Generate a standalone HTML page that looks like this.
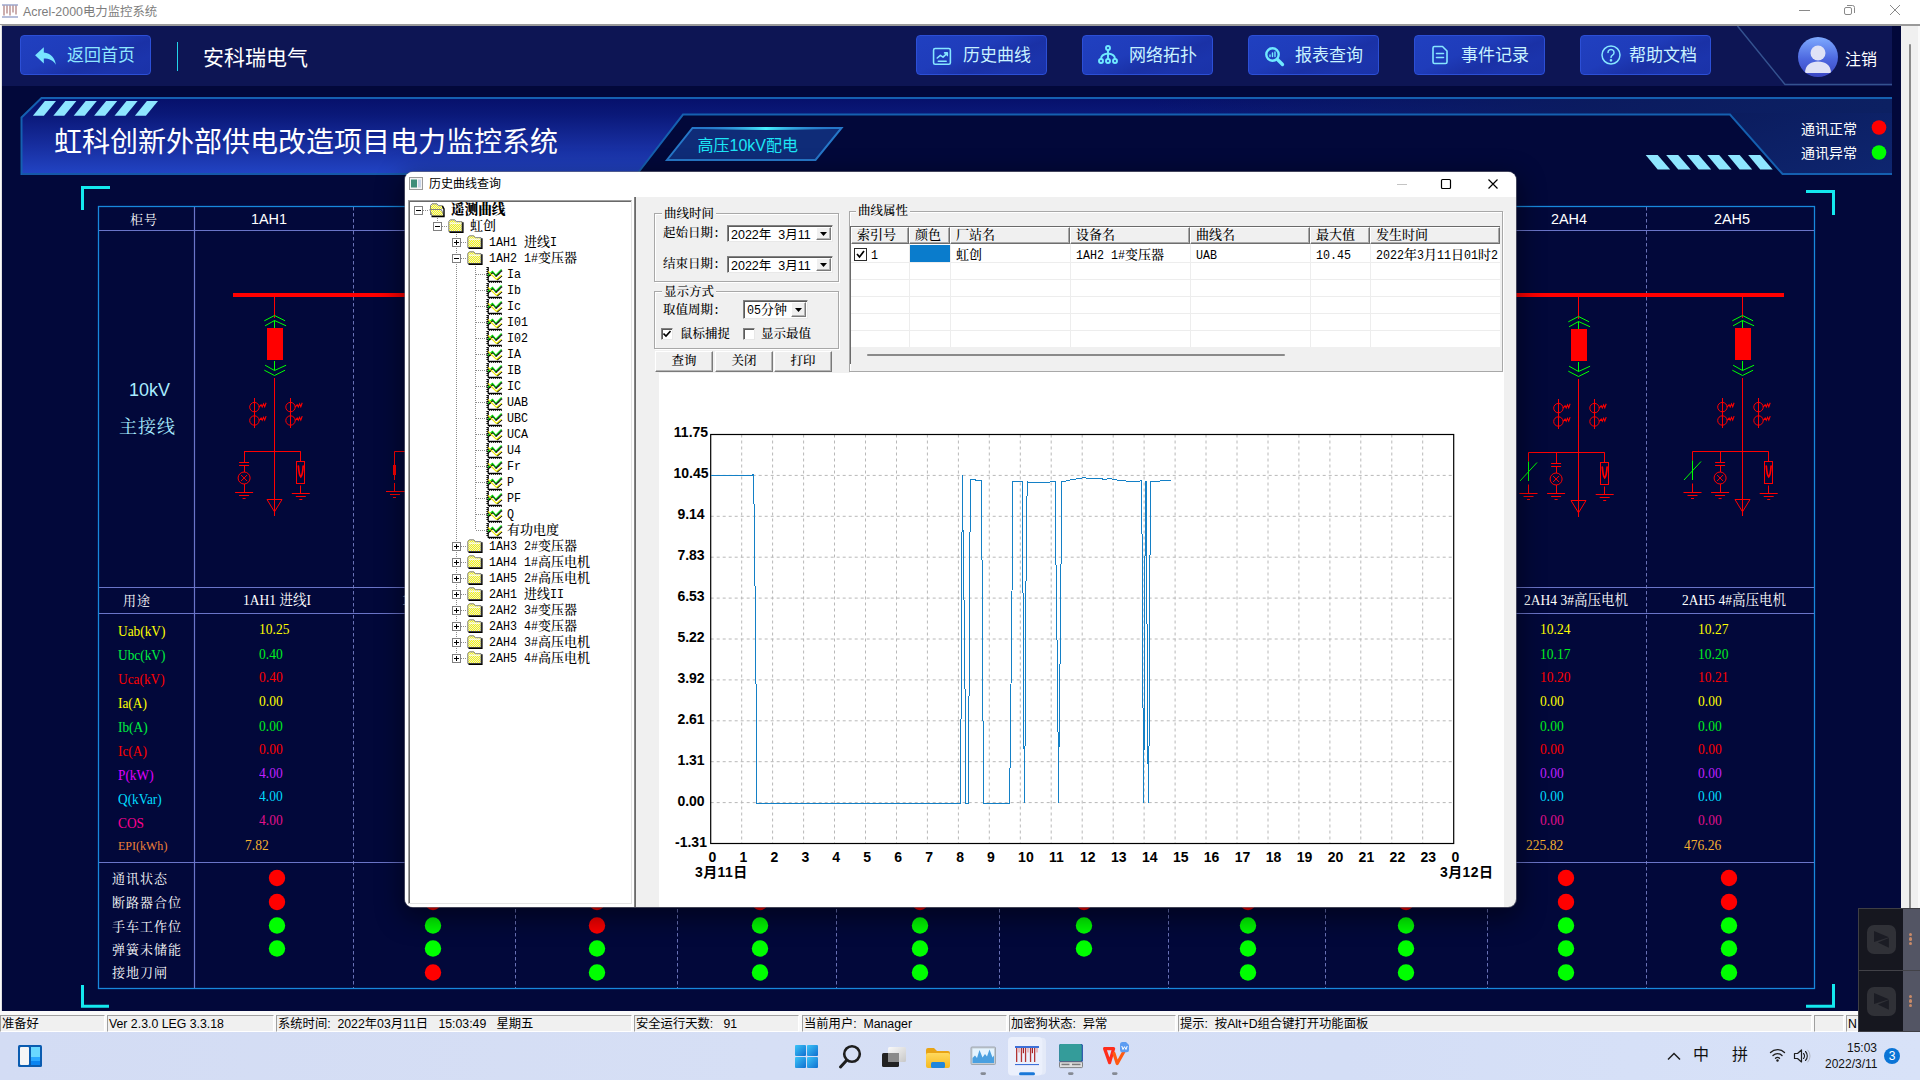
<!DOCTYPE html><html lang="zh"><head><meta charset="utf-8"><title>Acrel-2000电力监控系统</title><style>
*{box-sizing:border-box;margin:0;padding:0}
html,body{width:1920px;height:1080px;overflow:hidden;background:#fff}
body{position:relative;font-family:"Liberation Sans","Noto Sans CJK SC",sans-serif;font-size:12px;color:#000}
.abs{position:absolute}
.t{position:absolute;white-space:pre;line-height:1}
#app{position:absolute;left:2px;top:26px;width:1890px;height:985px;background:#02083a;overflow:hidden}
#toolbar{position:absolute;left:0;top:0;width:1890px;height:60px;background:#0d1554}
.tbtn{position:absolute;top:9px;width:131px;height:40px;border:1px solid #2c4fd6;border-radius:4px;
 background:linear-gradient(158deg,#2040c0 0%,#1f3cba 40%,#1a31a6 62%,#1b34ac 80%,#1a32a8 100%);color:#c8f2ff;font-size:17px;line-height:38px;white-space:nowrap}
.tbtn span{position:absolute;top:1px;line-height:38px}
.tbtn svg{position:absolute}
.serif{font-family:"Liberation Serif","Noto Serif CJK SC",serif}
.kai{font-family:"Liberation Serif","Noto Serif CJK SC",serif;letter-spacing:2px}
.sim{font-family:"Liberation Mono","Noto Serif CJK SC",monospace;font-size:12px}
</style></head><body>
<div class="abs" style="left:0;top:0;width:1920px;height:24px;background:#fff"></div>
<div class="abs" style="left:0;top:24px;width:1920px;height:2px;background:#9a9a9a"></div>
<div class="abs" style="left:0;top:25px;width:2px;height:990px;background:linear-gradient(90deg,#fafafa 60%,#b0b0b8)"></div>
<svg class="abs" style="left:2px;top:4px" width="18" height="16" viewBox="0 0 18 16"><rect x="0" y="0.500" width="16" height="1" fill="#6d7fb8"/><rect x="0" y="12.500" width="16" height="1" fill="#6d7fb8"/><g fill="#9a5f5f"><rect x="1.500" y="1.500" width="1" height="10"/><rect x="4.500" y="1.500" width="1" height="8"/><rect x="7.500" y="1.500" width="1" height="10"/><rect x="10.500" y="1.500" width="1" height="7"/><rect x="13.500" y="1.500" width="1" height="9"/></g></svg>
<div class="t" style="left:23px;top:6px;font-size:12.400px;color:#7d7d7d">Acrel-2000电力监控系统</div>
<svg class="abs" style="left:1790px;top:0" width="130" height="24" viewBox="0 0 130 24" fill="none" stroke="#8a8a8a" stroke-width="1"><path d="M9 10.5h11"/><rect x="54.5" y="7.5" width="7" height="7" rx="1.5"/><path d="M57 5.5h5.5a2 2 0 0 1 2 2V13"/><path d="M100 5l10 10M110 5l-10 10"/></svg>
<div class="abs" style="left:1892px;top:26px;width:9px;height:985px;background:#02083a"></div>
<div class="abs" style="left:1901px;top:26px;width:17px;height:985px;background:#f0f0f0"></div>
<div class="abs" style="left:1918px;top:26px;width:2px;height:985px;background:#fafafa"></div>
<div class="abs" style="left:1909px;top:44px;width:2px;height:950px;background:#8c8c8c;border-radius:1px"></div>
<div id="app">
<div id="toolbar">
<div class="tbtn" style="left:18px"><svg style="left:13px;top:10px" width="24" height="22" viewBox="0 0 22 20"><path d="M9 1L1 8.5 9 16v-4.6c5 0 8.5 1.6 11 5.6-.6-6-4.4-10.4-11-11.2z" fill="#78e4ff"/></svg><span style="left:46px;color:#8ee6ff">返回首页</span></div>
<div class="abs" style="left:174.500px;top:16px;width:1.500px;height:29px;background:#22d4e8"></div>
<div class="t" style="left:201px;top:21px;font-size:21px;color:#fff">安科瑞电气</div>
<div class="tbtn" style="left:914px"><svg style="left:14.500px;top:10.500px" width="21" height="21" viewBox="0 0 20 20" fill="none" stroke="#86e6ff" stroke-width="1.5" stroke-linecap="round" stroke-linejoin="round"><rect x="1.5" y="1.5" width="16" height="15" rx="1.5"/><path d="M5 10.5l3-2.6 2.5 1.8 4-3.9M12 5.6h2.6v2.6M6 13.6h7.5"/></svg><span style="left:46px">历史曲线</span></div>
<div class="tbtn" style="left:1080px"><svg style="left:14px;top:8px" width="22" height="22" viewBox="0 0 22 22" fill="none" stroke="#70eaff" stroke-width="1.900" stroke-linecap="round"><circle cx="11" cy="4" r="2"/><circle cx="4" cy="17" r="2"/><circle cx="11" cy="17" r="2"/><circle cx="18" cy="17" r="2"/><path d="M11 6v9M11 9.5C6 10 4 12 4 15M11 9.5c5 .5 7 2.500 7 5.500"/></svg><span style="left:46px">网络拓扑</span></div>
<div class="tbtn" style="left:1246px"><svg style="left:15px;top:10px" width="22" height="22" viewBox="0 0 22 22" fill="none" stroke="#70eaff" stroke-linecap="round"><circle cx="8.5" cy="8.500" r="6.2" stroke-width="2.400"/><path d="M13.5 13.5L18.500 18.500" stroke-width="3.300"/><path d="M6 10.5V9M8.500 10.500V7M11 10.500V6" stroke-width="1.400"/></svg><span style="left:46px">报表查询</span></div>
<div class="tbtn" style="left:1412px"><svg style="left:16px;top:9px" width="18" height="20" viewBox="0 0 18 20" fill="none" stroke="#86e6ff" stroke-width="1.600" stroke-linecap="round" stroke-linejoin="round"><path d="M3.500 1.500h8L16 6v11a1.500 1.500 0 0 1 -1.500 1.500h-11A1.500 1.500 0 0 1 2 17V3a1.500 1.500 0 0 1 1.500 -1.500z"/><path d="M5.500 8.500h7M5.500 12.500h7"/></svg><span style="left:46px">事件记录</span></div>
<div class="tbtn" style="left:1578px"><svg style="left:19px;top:8px" width="22" height="22" viewBox="0 0 22 22" fill="none" stroke="#86e6ff" stroke-width="1.500" stroke-linecap="round"><circle cx="11" cy="11" r="9"/><path d="M8 8.500a3 3 0 1 1 4.500 2.600c-1 .6-1.500 1.200-1.500 2.400"/><circle cx="11" cy="16.300" r=".6" fill="#86e6ff"/></svg><span style="left:48px">帮助文档</span></div>
</div>
<svg class="abs" style="left:1700px;top:0" width="190" height="62" viewBox="0 0 190 62"><path d="M35.500 0L83 58.500H190" fill="none" stroke="#34528f" stroke-width="1.500"/><defs><linearGradient id="av" x1="0" y1="0" x2="0" y2="1"><stop offset="0" stop-color="#7eaaff"/><stop offset=".55" stop-color="#4d68e0"/><stop offset="1" stop-color="#3a46c2"/></linearGradient><clipPath id="avc"><circle cx="116" cy="31" r="20"/></clipPath></defs><circle cx="116" cy="31" r="20" fill="url(#av)"/><g clip-path="url(#avc)" fill="#dfe2f6"><circle cx="116" cy="27" r="7.500"/><path d="M103 47c0-8 6-11.500 13-11.500s13 3.500 13 11.500z"/></g></svg>
<div class="t" style="left:1843px;top:26px;font-size:16px;color:#fff">注销</div>
<div id="appin" class="abs" style="left:-2px;top:-26px;width:1920px;height:1080px">
<svg class="abs" style="left:0;top:0" width="1920" height="1080" viewBox="0 0 1920 1080"><defs>
<linearGradient id="bn" gradientUnits="userSpaceOnUse" x1="0" y1="97" x2="0" y2="174"><stop offset="0" stop-color="#06106a"/><stop offset=".22" stop-color="#0a1878"/><stop offset=".6" stop-color="#162c9c"/><stop offset="1" stop-color="#2244c4"/></linearGradient>
<linearGradient id="rg" x1="0" y1="0" x2="1" y2="1"><stop offset="0" stop-color="#0b1c5e"/><stop offset="1" stop-color="#0e2670"/></linearGradient>
<linearGradient id="st" gradientUnits="userSpaceOnUse" x1="1150" y1="0" x2="1892" y2="0"><stop offset="0" stop-color="#0b1c5e" stop-opacity="0"/><stop offset=".6" stop-color="#0b1c5e" stop-opacity=".9"/><stop offset="1" stop-color="#0c2062"/></linearGradient>
<linearGradient id="hl" x1="0" y1="0" x2="1" y2="0"><stop offset="0" stop-color="#2a7fd0" stop-opacity="0"/><stop offset=".5" stop-color="#46f0ff"/><stop offset="1" stop-color="#2a7fd0" stop-opacity="0"/></linearGradient>
</defs><polygon points="42,97 1892,97 1892,114.500 25,114.500" fill="url(#bn)"/><rect x="1150" y="97" width="742" height="17.500" fill="url(#st)"/><polygon points="22,117 42,97 690,97 683,114 637,174 22,174" fill="url(#bn)"/><polygon points="1730,113 1892,113 1892,173.500 1782.500,173.500" fill="url(#rg)"/><path d="M21.500 175V117.500L41.500 98H1892" fill="none" stroke="#1560b0" stroke-width="2"/><path d="M637.500 173.500L683 114.600H1730L1782.500 174H1892" fill="none" stroke="#1560b0" stroke-width="2"/><path d="M22 174H637" stroke="#1558a8" stroke-width="2"/><polygon points="32.9,115.700 44.9,101 56.0,101 43.9,115.700" fill="#8ee6ff"/><polygon points="53.3,115.700 65.3,101 76.4,101 64.3,115.700" fill="#8ee6ff"/><polygon points="73.7,115.700 85.7,101 96.8,101 84.7,115.700" fill="#8ee6ff"/><polygon points="94.1,115.700 106.1,101 117.2,101 105.1,115.700" fill="#8ee6ff"/><polygon points="114.5,115.700 126.5,101 137.6,101 125.5,115.700" fill="#8ee6ff"/><polygon points="134.9,115.700 146.9,101 158.0,101 145.9,115.700" fill="#8ee6ff"/><polygon points="1645.7,155 1657.7,155 1670.2,169.500 1657.7,169.500" fill="#8ee6ff"/><polygon points="1666.2,155 1678.2,155 1690.7,169.500 1678.2,169.500" fill="#8ee6ff"/><polygon points="1686.7,155 1698.7,155 1711.2,169.500 1698.7,169.500" fill="#8ee6ff"/><polygon points="1707.2,155 1719.2,155 1731.7,169.500 1719.2,169.500" fill="#8ee6ff"/><polygon points="1727.7,155 1739.7,155 1752.2,169.500 1739.7,169.500" fill="#8ee6ff"/><polygon points="1748.2,155 1760.2,155 1772.7,169.500 1760.2,169.500" fill="#8ee6ff"/><polygon points="692.500,128 841.500,128 815.500,160 667,160" fill="#0f2c78" stroke="#2677c8" stroke-width="2"/><rect x="700" y="127" width="132" height="3" fill="url(#hl)"/><circle cx="1879" cy="127.500" r="7.300" fill="#ff0000"/><circle cx="1879" cy="152.500" r="7.300" fill="#00ff00"/><path d="M82.500 210V187.500H110" fill="none" stroke="#14e8ee" stroke-width="3"/><path d="M1806 191.500H1833.500V215" fill="none" stroke="#14e8ee" stroke-width="3"/><path d="M82.500 985V1006.200H109" fill="none" stroke="#14e8ee" stroke-width="3"/><path d="M1806 1006.200H1833.500V984" fill="none" stroke="#14e8ee" stroke-width="3"/><rect x="98.500" y="206.500" width="1716" height="782" fill="none" stroke="#1888dc" stroke-width="1.300"/><line x1="99" y1="230.5" x2="1814" y2="230.5" stroke="#6a74c8" stroke-width="1.200"/><line x1="99" y1="587.5" x2="1814" y2="587.5" stroke="#6a74c8" stroke-width="1.200"/><line x1="99" y1="613.5" x2="1814" y2="613.5" stroke="#6a74c8" stroke-width="1.200"/><line x1="99" y1="862.5" x2="1814" y2="862.5" stroke="#6a74c8" stroke-width="1.200"/><line x1="194.500" y1="207" x2="194.500" y2="988" stroke="#6a74c8" stroke-width="1.200"/><line x1="353.5" y1="207" x2="353.5" y2="988" stroke="#7c84cc" stroke-width="1" stroke-dasharray="3.500 2.500" opacity=".85"/><line x1="515.5" y1="207" x2="515.5" y2="988" stroke="#7c84cc" stroke-width="1" stroke-dasharray="3.500 2.500" opacity=".85"/><line x1="677.5" y1="207" x2="677.5" y2="988" stroke="#7c84cc" stroke-width="1" stroke-dasharray="3.500 2.500" opacity=".85"/><line x1="836.5" y1="207" x2="836.5" y2="988" stroke="#7c84cc" stroke-width="1" stroke-dasharray="3.500 2.500" opacity=".85"/><line x1="999.5" y1="207" x2="999.5" y2="988" stroke="#7c84cc" stroke-width="1" stroke-dasharray="3.500 2.500" opacity=".85"/><line x1="1168.5" y1="207" x2="1168.5" y2="988" stroke="#7c84cc" stroke-width="1" stroke-dasharray="3.500 2.500" opacity=".85"/><line x1="1325.5" y1="207" x2="1325.5" y2="988" stroke="#7c84cc" stroke-width="1" stroke-dasharray="3.500 2.500" opacity=".85"/><line x1="1487.5" y1="207" x2="1487.5" y2="988" stroke="#7c84cc" stroke-width="1" stroke-dasharray="3.500 2.500" opacity=".85"/><line x1="1646.5" y1="207" x2="1646.5" y2="988" stroke="#7c84cc" stroke-width="1" stroke-dasharray="3.500 2.500" opacity=".85"/><rect x="233" y="293" width="600" height="4" fill="#ff0000"/><rect x="1000" y="293" width="784" height="4" fill="#ff0000"/><line x1="274.5" y1="297.0" x2="274.5" y2="318.0" stroke="#ff0000" stroke-width="1"/><polyline points="264.3,320.8 274.5,315.5 285.1,320.8" fill="none" stroke="#00ff00" stroke-width="1"/><polyline points="265.1,325.8 274.5,320.5 286.1,325.8" fill="none" stroke="#00ff00" stroke-width="1"/><line x1="274.5" y1="320.5" x2="274.5" y2="329.0" stroke="#00ff00" stroke-width="1"/><rect x="267.0" y="328" width="16" height="32" fill="#ff0000"/><line x1="274.5" y1="361.0" x2="274.5" y2="370.5" stroke="#00ff00" stroke-width="1"/><polyline points="265.1,365.2 274.5,370.5 286.1,365.2" fill="none" stroke="#00ff00" stroke-width="1"/><polyline points="264.3,370.2 274.5,375.5 285.1,370.2" fill="none" stroke="#00ff00" stroke-width="1"/><line x1="274.5" y1="378.0" x2="274.5" y2="516.0" stroke="#ff0000" stroke-width="1"/><line x1="254.5" y1="398.0" x2="254.5" y2="428.0" stroke="#ff0000" stroke-width="1"/><circle cx="254.4" cy="407.1" r="4.7" fill="none" stroke="#ff0000" stroke-width="1"/><path d="M259.1 407.1l2 -2.400 1.100 2.200 1.300 -3 1.200 2.800 1.400 -4" fill="none" stroke="#ff0000" stroke-width="1.100"/><circle cx="254.4" cy="420.5" r="4.7" fill="none" stroke="#ff0000" stroke-width="1"/><path d="M259.1 420.5l2 -2.400 1.100 2.200 1.300 -3 1.200 2.800 1.400 -4" fill="none" stroke="#ff0000" stroke-width="1.100"/><line x1="290.5" y1="398.0" x2="290.5" y2="428.0" stroke="#ff0000" stroke-width="1"/><circle cx="290.5" cy="407.1" r="4.7" fill="none" stroke="#ff0000" stroke-width="1"/><path d="M295.2 407.1l2 -2.400 1.100 2.200 1.300 -3 1.200 2.800 1.400 -4" fill="none" stroke="#ff0000" stroke-width="1.100"/><circle cx="290.5" cy="420.5" r="4.7" fill="none" stroke="#ff0000" stroke-width="1"/><path d="M295.2 420.5l2 -2.400 1.100 2.200 1.300 -3 1.200 2.800 1.400 -4" fill="none" stroke="#ff0000" stroke-width="1.100"/><line x1="244.1" y1="451.5" x2="300.8" y2="451.5" stroke="#ff0000" stroke-width="1"/><line x1="244.5" y1="451.5" x2="244.5" y2="462.5" stroke="#ff0000" stroke-width="1"/><line x1="239.1" y1="462.5" x2="249.1" y2="462.5" stroke="#ff0000" stroke-width="1"/><line x1="239.1" y1="465.5" x2="249.1" y2="465.5" stroke="#ff0000" stroke-width="1"/><line x1="244.5" y1="465.5" x2="244.5" y2="472.0" stroke="#ff0000" stroke-width="1"/><circle cx="244.1" cy="478.0" r="6" fill="none" stroke="#ff0000" stroke-width="1"/><line x1="241.1" y1="475.0" x2="247.1" y2="481.0" stroke="#ff0000" stroke-width="1"/><line x1="241.1" y1="481.0" x2="247.1" y2="475.0" stroke="#ff0000" stroke-width="1"/><line x1="244.5" y1="484.0" x2="244.5" y2="492.5" stroke="#ff0000" stroke-width="1"/><line x1="235.1" y1="492.5" x2="253.1" y2="492.5" stroke="#ff0000" stroke-width="1"/><line x1="239.1" y1="495.5" x2="249.1" y2="495.5" stroke="#ff0000" stroke-width="1"/><line x1="242.6" y1="498.5" x2="245.6" y2="498.5" stroke="#ff0000" stroke-width="1"/><line x1="300.5" y1="451.5" x2="300.5" y2="461.5" stroke="#ff0000" stroke-width="1"/><rect x="296.5" y="461.5" width="8" height="22" fill="none" stroke="#ff0000" stroke-width="1"/><path d="M298.4 466.0c.3 4 .8 9.500 2.400 11c1.600 -1.500 2.100 -7 2.400 -11" fill="none" stroke="#ff0000" stroke-width="1.700" stroke-linecap="round"/><line x1="300.5" y1="485.5" x2="300.5" y2="493.5" stroke="#ff0000" stroke-width="1"/><line x1="291.8" y1="493.5" x2="309.8" y2="493.5" stroke="#ff0000" stroke-width="1"/><line x1="295.8" y1="496.5" x2="305.8" y2="496.5" stroke="#ff0000" stroke-width="1"/><line x1="299.3" y1="499.5" x2="302.3" y2="499.5" stroke="#ff0000" stroke-width="1"/><polygon points="267.0,499.5 282.0,499.5 274.5,511.8" fill="none" stroke="#ff0000" stroke-width="1"/><line x1="1578.5" y1="297.0" x2="1578.5" y2="319.0" stroke="#ff0000" stroke-width="1"/><polyline points="1568.3,321.8 1578.5,316.5 1589.1,321.8" fill="none" stroke="#00ff00" stroke-width="1"/><polyline points="1569.1,326.8 1578.5,321.5 1590.1,326.8" fill="none" stroke="#00ff00" stroke-width="1"/><line x1="1578.5" y1="321.5" x2="1578.5" y2="330.0" stroke="#00ff00" stroke-width="1"/><rect x="1571.0" y="329" width="16" height="32" fill="#ff0000"/><line x1="1578.5" y1="362.0" x2="1578.5" y2="371.5" stroke="#00ff00" stroke-width="1"/><polyline points="1569.1,366.2 1578.5,371.5 1590.1,366.2" fill="none" stroke="#00ff00" stroke-width="1"/><polyline points="1568.3,371.2 1578.5,376.5 1589.1,371.2" fill="none" stroke="#00ff00" stroke-width="1"/><line x1="1578.5" y1="379.0" x2="1578.5" y2="517.0" stroke="#ff0000" stroke-width="1"/><line x1="1558.5" y1="399.0" x2="1558.5" y2="429.0" stroke="#ff0000" stroke-width="1"/><circle cx="1558.4" cy="408.1" r="4.7" fill="none" stroke="#ff0000" stroke-width="1"/><path d="M1563.1 408.1l2 -2.400 1.100 2.200 1.300 -3 1.200 2.800 1.400 -4" fill="none" stroke="#ff0000" stroke-width="1.100"/><circle cx="1558.4" cy="421.5" r="4.7" fill="none" stroke="#ff0000" stroke-width="1"/><path d="M1563.1 421.5l2 -2.400 1.100 2.200 1.300 -3 1.200 2.800 1.400 -4" fill="none" stroke="#ff0000" stroke-width="1.100"/><line x1="1594.5" y1="399.0" x2="1594.5" y2="429.0" stroke="#ff0000" stroke-width="1"/><circle cx="1594.5" cy="408.1" r="4.7" fill="none" stroke="#ff0000" stroke-width="1"/><path d="M1599.2 408.1l2 -2.400 1.100 2.200 1.300 -3 1.200 2.800 1.400 -4" fill="none" stroke="#ff0000" stroke-width="1.100"/><circle cx="1594.5" cy="421.5" r="4.7" fill="none" stroke="#ff0000" stroke-width="1"/><path d="M1599.2 421.5l2 -2.400 1.100 2.200 1.300 -3 1.200 2.800 1.400 -4" fill="none" stroke="#ff0000" stroke-width="1.100"/><line x1="1528.5" y1="452.5" x2="1604.7" y2="452.5" stroke="#ff0000" stroke-width="1"/><line x1="1556.5" y1="452.5" x2="1556.5" y2="463.5" stroke="#ff0000" stroke-width="1"/><line x1="1551.1" y1="463.5" x2="1561.1" y2="463.5" stroke="#ff0000" stroke-width="1"/><line x1="1551.1" y1="466.5" x2="1561.1" y2="466.5" stroke="#ff0000" stroke-width="1"/><line x1="1556.5" y1="466.5" x2="1556.5" y2="473.0" stroke="#ff0000" stroke-width="1"/><circle cx="1556.1" cy="479.0" r="6" fill="none" stroke="#ff0000" stroke-width="1"/><line x1="1553.1" y1="476.0" x2="1559.1" y2="482.0" stroke="#ff0000" stroke-width="1"/><line x1="1553.1" y1="482.0" x2="1559.1" y2="476.0" stroke="#ff0000" stroke-width="1"/><line x1="1556.5" y1="485.0" x2="1556.5" y2="493.5" stroke="#ff0000" stroke-width="1"/><line x1="1547.1" y1="493.5" x2="1565.1" y2="493.5" stroke="#ff0000" stroke-width="1"/><line x1="1551.1" y1="496.5" x2="1561.1" y2="496.5" stroke="#ff0000" stroke-width="1"/><line x1="1554.6" y1="499.5" x2="1557.6" y2="499.5" stroke="#ff0000" stroke-width="1"/><line x1="1604.5" y1="452.5" x2="1604.5" y2="462.5" stroke="#ff0000" stroke-width="1"/><rect x="1600.5" y="462.5" width="8" height="22" fill="none" stroke="#ff0000" stroke-width="1"/><path d="M1602.3 467.0c.3 4 .8 9.500 2.400 11c1.600 -1.500 2.100 -7 2.400 -11" fill="none" stroke="#ff0000" stroke-width="1.700" stroke-linecap="round"/><line x1="1604.5" y1="486.5" x2="1604.5" y2="494.5" stroke="#ff0000" stroke-width="1"/><line x1="1595.7" y1="494.5" x2="1613.7" y2="494.5" stroke="#ff0000" stroke-width="1"/><line x1="1599.7" y1="497.5" x2="1609.7" y2="497.5" stroke="#ff0000" stroke-width="1"/><line x1="1603.2" y1="500.5" x2="1606.2" y2="500.5" stroke="#ff0000" stroke-width="1"/><line x1="1528.5" y1="452.5" x2="1528.5" y2="461.5" stroke="#ff0000" stroke-width="1"/><line x1="1528.5" y1="461.5" x2="1528.5" y2="481.0" stroke="#00ff00" stroke-width="1"/><line x1="1520.0" y1="481.0" x2="1537.0" y2="462.5" stroke="#00ff00" stroke-width="1"/><line x1="1528.5" y1="484.5" x2="1528.5" y2="493.0" stroke="#ff0000" stroke-width="1"/><line x1="1519.5" y1="493.5" x2="1537.5" y2="493.5" stroke="#ff0000" stroke-width="1"/><line x1="1523.5" y1="496.5" x2="1533.5" y2="496.5" stroke="#ff0000" stroke-width="1"/><line x1="1527.0" y1="499.5" x2="1530.0" y2="499.5" stroke="#ff0000" stroke-width="1"/><polygon points="1571.0,500.5 1586.0,500.5 1578.5,512.8" fill="none" stroke="#ff0000" stroke-width="1"/><line x1="1742.5" y1="297.0" x2="1742.5" y2="318.0" stroke="#ff0000" stroke-width="1"/><polyline points="1732.3,320.8 1742.5,315.5 1753.1,320.8" fill="none" stroke="#00ff00" stroke-width="1"/><polyline points="1733.1,325.8 1742.5,320.5 1754.1,325.8" fill="none" stroke="#00ff00" stroke-width="1"/><line x1="1742.5" y1="320.5" x2="1742.5" y2="329.0" stroke="#00ff00" stroke-width="1"/><rect x="1735.0" y="328" width="16" height="32" fill="#ff0000"/><line x1="1742.5" y1="361.0" x2="1742.5" y2="370.5" stroke="#00ff00" stroke-width="1"/><polyline points="1733.1,365.2 1742.5,370.5 1754.1,365.2" fill="none" stroke="#00ff00" stroke-width="1"/><polyline points="1732.3,370.2 1742.5,375.5 1753.1,370.2" fill="none" stroke="#00ff00" stroke-width="1"/><line x1="1742.5" y1="378.0" x2="1742.5" y2="516.0" stroke="#ff0000" stroke-width="1"/><line x1="1722.5" y1="398.0" x2="1722.5" y2="428.0" stroke="#ff0000" stroke-width="1"/><circle cx="1722.4" cy="407.1" r="4.7" fill="none" stroke="#ff0000" stroke-width="1"/><path d="M1727.1 407.1l2 -2.400 1.100 2.200 1.300 -3 1.200 2.800 1.400 -4" fill="none" stroke="#ff0000" stroke-width="1.100"/><circle cx="1722.4" cy="420.5" r="4.7" fill="none" stroke="#ff0000" stroke-width="1"/><path d="M1727.1 420.5l2 -2.400 1.100 2.200 1.300 -3 1.200 2.800 1.400 -4" fill="none" stroke="#ff0000" stroke-width="1.100"/><line x1="1758.5" y1="398.0" x2="1758.5" y2="428.0" stroke="#ff0000" stroke-width="1"/><circle cx="1758.5" cy="407.1" r="4.7" fill="none" stroke="#ff0000" stroke-width="1"/><path d="M1763.2 407.1l2 -2.400 1.100 2.200 1.300 -3 1.200 2.800 1.400 -4" fill="none" stroke="#ff0000" stroke-width="1.100"/><circle cx="1758.5" cy="420.5" r="4.7" fill="none" stroke="#ff0000" stroke-width="1"/><path d="M1763.2 420.5l2 -2.400 1.100 2.200 1.300 -3 1.200 2.800 1.400 -4" fill="none" stroke="#ff0000" stroke-width="1.100"/><line x1="1692.5" y1="451.5" x2="1768.7" y2="451.5" stroke="#ff0000" stroke-width="1"/><line x1="1720.5" y1="451.5" x2="1720.5" y2="462.5" stroke="#ff0000" stroke-width="1"/><line x1="1715.1" y1="462.5" x2="1725.1" y2="462.5" stroke="#ff0000" stroke-width="1"/><line x1="1715.1" y1="465.5" x2="1725.1" y2="465.5" stroke="#ff0000" stroke-width="1"/><line x1="1720.5" y1="465.5" x2="1720.5" y2="472.0" stroke="#ff0000" stroke-width="1"/><circle cx="1720.1" cy="478.0" r="6" fill="none" stroke="#ff0000" stroke-width="1"/><line x1="1717.1" y1="475.0" x2="1723.1" y2="481.0" stroke="#ff0000" stroke-width="1"/><line x1="1717.1" y1="481.0" x2="1723.1" y2="475.0" stroke="#ff0000" stroke-width="1"/><line x1="1720.5" y1="484.0" x2="1720.5" y2="492.5" stroke="#ff0000" stroke-width="1"/><line x1="1711.1" y1="492.5" x2="1729.1" y2="492.5" stroke="#ff0000" stroke-width="1"/><line x1="1715.1" y1="495.5" x2="1725.1" y2="495.5" stroke="#ff0000" stroke-width="1"/><line x1="1718.6" y1="498.5" x2="1721.6" y2="498.5" stroke="#ff0000" stroke-width="1"/><line x1="1768.5" y1="451.5" x2="1768.5" y2="461.5" stroke="#ff0000" stroke-width="1"/><rect x="1764.5" y="461.5" width="8" height="22" fill="none" stroke="#ff0000" stroke-width="1"/><path d="M1766.3 466.0c.3 4 .8 9.500 2.400 11c1.600 -1.500 2.100 -7 2.400 -11" fill="none" stroke="#ff0000" stroke-width="1.700" stroke-linecap="round"/><line x1="1768.5" y1="485.5" x2="1768.5" y2="493.5" stroke="#ff0000" stroke-width="1"/><line x1="1759.7" y1="493.5" x2="1777.7" y2="493.5" stroke="#ff0000" stroke-width="1"/><line x1="1763.7" y1="496.5" x2="1773.7" y2="496.5" stroke="#ff0000" stroke-width="1"/><line x1="1767.2" y1="499.5" x2="1770.2" y2="499.5" stroke="#ff0000" stroke-width="1"/><line x1="1692.5" y1="451.5" x2="1692.5" y2="460.5" stroke="#ff0000" stroke-width="1"/><line x1="1692.5" y1="460.5" x2="1692.5" y2="480.0" stroke="#00ff00" stroke-width="1"/><line x1="1684.0" y1="480.0" x2="1701.0" y2="461.5" stroke="#00ff00" stroke-width="1"/><line x1="1692.5" y1="483.5" x2="1692.5" y2="492.0" stroke="#ff0000" stroke-width="1"/><line x1="1683.5" y1="492.5" x2="1701.5" y2="492.5" stroke="#ff0000" stroke-width="1"/><line x1="1687.5" y1="495.5" x2="1697.5" y2="495.5" stroke="#ff0000" stroke-width="1"/><line x1="1691.0" y1="498.5" x2="1694.0" y2="498.5" stroke="#ff0000" stroke-width="1"/><polygon points="1735.0,499.5 1750.0,499.5 1742.5,511.8" fill="none" stroke="#ff0000" stroke-width="1"/><g stroke="#ff0000" stroke-width="1"><line x1="394.500" y1="451.500" x2="410" y2="451.500"/><line x1="394.500" y1="451.500" x2="394.500" y2="480"/><line x1="394.500" y1="483" x2="394.500" y2="491.500"/><line x1="386" y1="491.500" x2="410" y2="491.500"/><line x1="390" y1="494.500" x2="400" y2="494.500"/><line x1="393" y1="497.500" x2="396" y2="497.500"/></g><rect x="393" y="465" width="3" height="10" fill="#ff0000"/><circle cx="277" cy="878" r="8.200" fill="#ff0000"/><circle cx="277" cy="902" r="8.200" fill="#ff0000"/><circle cx="277" cy="925.5" r="8.200" fill="#00ff00"/><circle cx="277" cy="948.5" r="8.200" fill="#00ff00"/><circle cx="433" cy="878" r="8.200" fill="#ff0000"/><circle cx="433" cy="902" r="8.200" fill="#ff0000"/><circle cx="433" cy="925.5" r="8.200" fill="#00ff00"/><circle cx="433" cy="948.5" r="8.200" fill="#00ff00"/><circle cx="433" cy="972.5" r="8.200" fill="#ff0000"/><circle cx="597" cy="878" r="8.200" fill="#ff0000"/><circle cx="597" cy="902" r="8.200" fill="#ff0000"/><circle cx="597" cy="925.5" r="8.200" fill="#ff0000"/><circle cx="597" cy="948.5" r="8.200" fill="#00ff00"/><circle cx="597" cy="972.5" r="8.200" fill="#00ff00"/><circle cx="760" cy="878" r="8.200" fill="#ff0000"/><circle cx="760" cy="902" r="8.200" fill="#ff0000"/><circle cx="760" cy="925.5" r="8.200" fill="#00ff00"/><circle cx="760" cy="948.5" r="8.200" fill="#00ff00"/><circle cx="760" cy="972.5" r="8.200" fill="#00ff00"/><circle cx="920" cy="878" r="8.200" fill="#ff0000"/><circle cx="920" cy="902" r="8.200" fill="#ff0000"/><circle cx="920" cy="925.5" r="8.200" fill="#00ff00"/><circle cx="920" cy="948.5" r="8.200" fill="#00ff00"/><circle cx="920" cy="972.5" r="8.200" fill="#00ff00"/><circle cx="1084" cy="878" r="8.200" fill="#ff0000"/><circle cx="1084" cy="902" r="8.200" fill="#ff0000"/><circle cx="1084" cy="925.5" r="8.200" fill="#00ff00"/><circle cx="1084" cy="948.5" r="8.200" fill="#00ff00"/><circle cx="1248" cy="878" r="8.200" fill="#ff0000"/><circle cx="1248" cy="902" r="8.200" fill="#ff0000"/><circle cx="1248" cy="925.5" r="8.200" fill="#00ff00"/><circle cx="1248" cy="948.5" r="8.200" fill="#00ff00"/><circle cx="1248" cy="972.5" r="8.200" fill="#00ff00"/><circle cx="1406" cy="878" r="8.200" fill="#ff0000"/><circle cx="1406" cy="902" r="8.200" fill="#ff0000"/><circle cx="1406" cy="925.5" r="8.200" fill="#00ff00"/><circle cx="1406" cy="948.5" r="8.200" fill="#00ff00"/><circle cx="1406" cy="972.5" r="8.200" fill="#00ff00"/><circle cx="1566" cy="878" r="8.200" fill="#ff0000"/><circle cx="1566" cy="902" r="8.200" fill="#ff0000"/><circle cx="1566" cy="925.5" r="8.200" fill="#00ff00"/><circle cx="1566" cy="948.5" r="8.200" fill="#00ff00"/><circle cx="1566" cy="972.5" r="8.200" fill="#00ff00"/><circle cx="1729" cy="878" r="8.200" fill="#ff0000"/><circle cx="1729" cy="902" r="8.200" fill="#ff0000"/><circle cx="1729" cy="925.5" r="8.200" fill="#00ff00"/><circle cx="1729" cy="948.5" r="8.200" fill="#00ff00"/><circle cx="1729" cy="972.5" r="8.200" fill="#00ff00"/></svg>
<div class="t " style="left:54px;top:129px;font-size:28px;color:#fff;">虹科创新外部供电改造项目电力监控系统</div>
<div class="t " style="left:697.5px;top:137.5px;font-size:16px;color:#1ce6f6;">高压10kV配电</div>
<div class="t " style="left:1801px;top:122px;font-size:14px;color:#fff;">通讯正常</div>
<div class="t " style="left:1801px;top:146px;font-size:14px;color:#fff;">通讯异常</div>
<div class="t kai" style="left:130px;top:212.5px;font-size:13px;color:#fff;letter-spacing:1px">柜号</div>
<div class="t kai" style="left:123px;top:594px;font-size:13px;color:#fff;letter-spacing:1px">用途</div>
<div class="t " style="left:129px;top:381px;font-size:18px;color:#a8ecff;">10kV</div>
<div class="t kai" style="left:119px;top:418px;font-size:18px;color:#a8ecff;letter-spacing:1px">主接线</div>
<div class="t " style="left:169px;width:200px;text-align:center;top:211px;font-size:15.5px;color:#fff;transform:scaleX(0.93)">1AH1</div>
<div class="t " style="left:1469px;width:200px;text-align:center;top:211px;font-size:15.5px;color:#fff;transform:scaleX(0.93)">2AH4</div>
<div class="t " style="left:1632px;width:200px;text-align:center;top:211px;font-size:15.5px;color:#fff;transform:scaleX(0.93)">2AH5</div>
<div class="t serif" style="left:177px;width:200px;text-align:center;top:593px;font-size:15px;color:#fff;transform:scaleX(0.9)">1AH1 进线I</div>
<div class="t serif" style="left:1475.5px;width:200px;text-align:center;top:593px;font-size:15px;color:#fff;transform:scaleX(0.9)">2AH4 3#高压电机</div>
<div class="t serif" style="left:1633.5px;width:200px;text-align:center;top:593px;font-size:15px;color:#fff;transform:scaleX(0.9)">2AH5 4#高压电机</div>
<div class="t serif" style="left:402px;top:593px;font-size:15px;color:#fff;transform:scaleX(.9);transform-origin:0 50%">1AH2 1#变压器</div>
<div class="t serif" style="left:118px;top:623.5px;font-size:15px;color:#ffff00;transform:scaleX(.89);transform-origin:0 50%">Uab(kV)</div>
<div class="t serif" style="left:118px;top:647.5px;font-size:15px;color:#00f040;transform:scaleX(.89);transform-origin:0 50%">Ubc(kV)</div>
<div class="t serif" style="left:118px;top:671.5px;font-size:15px;color:#ff0000;transform:scaleX(.89);transform-origin:0 50%">Uca(kV)</div>
<div class="t serif" style="left:118px;top:695.5px;font-size:15px;color:#ffff00;transform:scaleX(.89);transform-origin:0 50%">Ia(A)</div>
<div class="t serif" style="left:118px;top:719.5px;font-size:15px;color:#00f040;transform:scaleX(.89);transform-origin:0 50%">Ib(A)</div>
<div class="t serif" style="left:118px;top:743.5px;font-size:15px;color:#ff0000;transform:scaleX(.89);transform-origin:0 50%">Ic(A)</div>
<div class="t serif" style="left:118px;top:767.5px;font-size:15px;color:#e000ff;transform:scaleX(.89);transform-origin:0 50%">P(kW)</div>
<div class="t serif" style="left:118px;top:791.5px;font-size:15px;color:#00dcff;transform:scaleX(.89);transform-origin:0 50%">Q(kVar)</div>
<div class="t serif" style="left:118px;top:815.5px;font-size:15px;color:#ff0090;transform:scaleX(.89);transform-origin:0 50%">COS</div>
<div class="t serif" style="left:118px;top:839.0px;font-size:13.5px;color:#f08038;transform:scaleX(.89);transform-origin:0 50%">EPI(kWh)</div>
<div class="t serif" style="left:259px;top:622.2px;font-size:15px;color:#ffff00;transform:scaleX(.9);transform-origin:0 50%">10.25</div>
<div class="t serif" style="left:259px;top:647.2px;font-size:15px;color:#00f020;transform:scaleX(.9);transform-origin:0 50%">0.40</div>
<div class="t serif" style="left:259px;top:670.2px;font-size:15px;color:#ff0000;transform:scaleX(.9);transform-origin:0 50%">0.40</div>
<div class="t serif" style="left:259px;top:694.2px;font-size:15px;color:#ffff00;transform:scaleX(.9);transform-origin:0 50%">0.00</div>
<div class="t serif" style="left:259px;top:719.2px;font-size:15px;color:#00f020;transform:scaleX(.9);transform-origin:0 50%">0.00</div>
<div class="t serif" style="left:259px;top:742.2px;font-size:15px;color:#ff0000;transform:scaleX(.9);transform-origin:0 50%">0.00</div>
<div class="t serif" style="left:259px;top:766.2px;font-size:15px;color:#c020ff;transform:scaleX(.9);transform-origin:0 50%">4.00</div>
<div class="t serif" style="left:259px;top:789.2px;font-size:15px;color:#00dcff;transform:scaleX(.9);transform-origin:0 50%">4.00</div>
<div class="t serif" style="left:259px;top:813.2px;font-size:15px;color:#e0108c;transform:scaleX(.9);transform-origin:0 50%">4.00</div>
<div class="t serif" style="left:245px;top:838.2px;font-size:15px;color:#f4b030;transform:scaleX(.9);transform-origin:0 50%">7.82</div>
<div class="t serif" style="left:1540px;top:622.2px;font-size:15px;color:#ffff00;transform:scaleX(.9);transform-origin:0 50%">10.24</div>
<div class="t serif" style="left:1540px;top:647.2px;font-size:15px;color:#00f020;transform:scaleX(.9);transform-origin:0 50%">10.17</div>
<div class="t serif" style="left:1540px;top:670.2px;font-size:15px;color:#ff0000;transform:scaleX(.9);transform-origin:0 50%">10.20</div>
<div class="t serif" style="left:1540px;top:694.2px;font-size:15px;color:#ffff00;transform:scaleX(.9);transform-origin:0 50%">0.00</div>
<div class="t serif" style="left:1540px;top:719.2px;font-size:15px;color:#00f020;transform:scaleX(.9);transform-origin:0 50%">0.00</div>
<div class="t serif" style="left:1540px;top:742.2px;font-size:15px;color:#ff0000;transform:scaleX(.9);transform-origin:0 50%">0.00</div>
<div class="t serif" style="left:1540px;top:766.2px;font-size:15px;color:#c020ff;transform:scaleX(.9);transform-origin:0 50%">0.00</div>
<div class="t serif" style="left:1540px;top:789.2px;font-size:15px;color:#00dcff;transform:scaleX(.9);transform-origin:0 50%">0.00</div>
<div class="t serif" style="left:1540px;top:813.2px;font-size:15px;color:#e0108c;transform:scaleX(.9);transform-origin:0 50%">0.00</div>
<div class="t serif" style="left:1526px;top:838.2px;font-size:15px;color:#f4b030;transform:scaleX(.9);transform-origin:0 50%">225.82</div>
<div class="t serif" style="left:1698px;top:622.2px;font-size:15px;color:#ffff00;transform:scaleX(.9);transform-origin:0 50%">10.27</div>
<div class="t serif" style="left:1698px;top:647.2px;font-size:15px;color:#00f020;transform:scaleX(.9);transform-origin:0 50%">10.20</div>
<div class="t serif" style="left:1698px;top:670.2px;font-size:15px;color:#ff0000;transform:scaleX(.9);transform-origin:0 50%">10.21</div>
<div class="t serif" style="left:1698px;top:694.2px;font-size:15px;color:#ffff00;transform:scaleX(.9);transform-origin:0 50%">0.00</div>
<div class="t serif" style="left:1698px;top:719.2px;font-size:15px;color:#00f020;transform:scaleX(.9);transform-origin:0 50%">0.00</div>
<div class="t serif" style="left:1698px;top:742.2px;font-size:15px;color:#ff0000;transform:scaleX(.9);transform-origin:0 50%">0.00</div>
<div class="t serif" style="left:1698px;top:766.2px;font-size:15px;color:#c020ff;transform:scaleX(.9);transform-origin:0 50%">0.00</div>
<div class="t serif" style="left:1698px;top:789.2px;font-size:15px;color:#00dcff;transform:scaleX(.9);transform-origin:0 50%">0.00</div>
<div class="t serif" style="left:1698px;top:813.2px;font-size:15px;color:#e0108c;transform:scaleX(.9);transform-origin:0 50%">0.00</div>
<div class="t serif" style="left:1684px;top:838.2px;font-size:15px;color:#f4b030;transform:scaleX(.9);transform-origin:0 50%">476.26</div>
<div class="t kai" style="left:112px;top:871.5px;font-size:13px;color:#fff;letter-spacing:1px">通讯状态</div>
<div class="t kai" style="left:112px;top:895.5px;font-size:13px;color:#fff;letter-spacing:1px">断路器合位</div>
<div class="t kai" style="left:112px;top:919.5px;font-size:13px;color:#fff;letter-spacing:1px">手车工作位</div>
<div class="t kai" style="left:112px;top:943.0px;font-size:13px;color:#fff;letter-spacing:1px">弹簧未储能</div>
<div class="t kai" style="left:112px;top:966.0px;font-size:13px;color:#fff;letter-spacing:1px">接地刀闸</div>
</div>
</div>
<style>
#dlg{position:absolute;left:405px;top:172px;width:1111px;height:735px;background:#f0f0f0;border-radius:8px 8px 8px 8px;box-shadow:0 0 0 1px rgba(120,120,130,.55),0 8px 26px 4px rgba(0,0,0,.45);overflow:hidden}
#dlgin{position:absolute;left:-405px;top:-172px;width:1920px;height:1080px}
.st{font-family:"Liberation Mono","Noto Serif CJK SC",monospace;font-size:13px;color:#000;font-weight:500}
.tr{font-size:13px}
.st b{font-family:"Liberation Mono","Noto Serif CJK SC",monospace}
.lat{font-family:"Liberation Mono",monospace;font-size:13px;font-weight:400;display:inline-block;transform:scaleX(.897);transform-origin:0 50%;white-space:pre;overflow:visible;vertical-align:baseline}
.gb{position:absolute;border:1px solid #a8a8a8;box-shadow:inset 1px 1px 0 #fff,1px 1px 0 #fff}
.gbl{position:absolute;background:#f0f0f0;padding:0 2px;line-height:1;white-space:pre;font-size:12.500px!important}
.lb{font-size:12.500px!important}
.sunk{position:absolute;background:#fff;border:1px solid;border-color:#828282 #e8e8e8 #e8e8e8 #828282;box-shadow:inset 1px 1px 0 #5a5a5a}
.btn3{position:absolute;background:#f0f0f0;border:1px solid;border-color:#fff #7a7a7a #7a7a7a #fff;box-shadow:inset -1px -1px 0 #b4b4b4;text-align:center;white-space:pre}
.axl{position:absolute;font-family:"Liberation Sans","Noto Sans CJK SC",sans-serif;font-weight:bold;font-size:14px;line-height:1;white-space:pre;color:#000}
</style>
<div id="dlg"><div id="dlgin">
<div class="abs" style="left:405px;top:172px;width:1111px;height:25px;background:#fff"></div>
<svg class="abs" style="left:409px;top:177px" width="14" height="13" viewBox="0 0 14 13"><rect x=".5" y=".5" width="13" height="12" fill="#f4f4f4" stroke="#9a9a9a"/><rect x="2" y="2.500" width="6" height="8" fill="#3f8e7a"/><rect x="9" y="2.500" width="3" height="8" fill="#c8d4e8"/></svg>
<div class="t" style="left:429px;top:177.500px;font-size:12px;color:#000">历史曲线查询</div>
<svg class="abs" style="left:1390px;top:172px" width="120" height="26" viewBox="0 0 120 26" fill="none"><path d="M7 12.500h10" stroke="#c4c4c4" stroke-width="1"/><rect x="51.500" y="7.500" width="9" height="9" rx="1" stroke="#000" stroke-width="1.200"/><path d="M98.500 7.500l9 9M107.500 7.500l-9 9" stroke="#000" stroke-width="1.200"/></svg>
<div class="abs" style="left:405px;top:197px;width:231px;height:710px;background:#fff"></div>
<div class="abs" style="left:408px;top:200px;width:224px;height:704px;background:#fff;border:1px solid;border-color:#a0a0a0 #e3e3e3 #e3e3e3 #a0a0a0;box-shadow:inset 1px 1px 0 #696969"></div>
<div class="abs" style="left:634px;top:197px;width:2px;height:710px;background:linear-gradient(90deg,#909090,#5e5e5e)"></div>
<svg class="abs" style="left:405px;top:198px" width="231" height="709" viewBox="405 198 231 709"><defs><pattern id="dth" width="2" height="2" patternUnits="userSpaceOnUse"><rect width="2" height="2" fill="#ffff00"/><rect width="1" height="1" fill="#e4e4e4"/><rect x="1" y="1" width="1" height="1" fill="#e4e4e4"/></pattern></defs><line x1="437.500" y1="216" x2="437.500" y2="222" stroke="#8c8c8c" stroke-width="1" stroke-dasharray="1 1"/><line x1="456.500" y1="232" x2="456.500" y2="654" stroke="#8c8c8c" stroke-width="1" stroke-dasharray="1 1"/><line x1="475.500" y1="264" x2="475.500" y2="530" stroke="#8c8c8c" stroke-width="1" stroke-dasharray="1 1"/><line x1="423" y1="210.5" x2="429" y2="210.5" stroke="#8c8c8c" stroke-width="1" stroke-dasharray="1 1"/><rect x="414.5" y="206.5" width="8" height="8" fill="#fff" stroke="#808080"/><line x1="416" y1="210.5" x2="421" y2="210.5" stroke="#000"/><g><path d="M430.5 215V205.5l1.500 -1.700h5l1.500 1.900h4v3" fill="url(#dth)" stroke="#808080" stroke-width="1"/><path d="M429.8 209.5h11.500l2.800 6.500h-12z" fill="url(#dth)" stroke="#808080" stroke-width="1"/><path d="M431.5 216.5h12.500v-7.500l-1.500 -3" fill="none" stroke="#000" stroke-width="1.400"/></g><line x1="442" y1="226.5" x2="448" y2="226.5" stroke="#8c8c8c" stroke-width="1" stroke-dasharray="1 1"/><rect x="433.5" y="222.5" width="8" height="8" fill="#fff" stroke="#808080"/><line x1="435" y1="226.5" x2="440" y2="226.5" stroke="#000"/><g><path d="M448.8 231.5V221.5l1.500 -1.700h4.500l1.500 1.900h5.700v9.800z" fill="url(#dth)" stroke="#808080" stroke-width="1"/><path d="M449.8 223.2h11.500" stroke="#fff" stroke-width="1"/><path d="M449.5 232.2h13.400v-10" fill="none" stroke="#000" stroke-width="1.400"/></g><line x1="461" y1="242.5" x2="467" y2="242.5" stroke="#8c8c8c" stroke-width="1" stroke-dasharray="1 1"/><rect x="452.5" y="238.5" width="8" height="8" fill="#fff" stroke="#808080"/><line x1="454" y1="242.5" x2="459" y2="242.5" stroke="#000"/><line x1="456.5" y1="240" x2="456.5" y2="245" stroke="#000"/><g><path d="M467.8 247.5V237.5l1.500 -1.700h4.500l1.500 1.900h5.700v9.800z" fill="url(#dth)" stroke="#808080" stroke-width="1"/><path d="M468.8 239.2h11.500" stroke="#fff" stroke-width="1"/><path d="M468.5 248.2h13.400v-10" fill="none" stroke="#000" stroke-width="1.400"/></g><line x1="461" y1="258.5" x2="467" y2="258.5" stroke="#8c8c8c" stroke-width="1" stroke-dasharray="1 1"/><rect x="452.5" y="254.5" width="8" height="8" fill="#fff" stroke="#808080"/><line x1="454" y1="258.5" x2="459" y2="258.5" stroke="#000"/><g><path d="M467.8 263.5V253.5l1.500 -1.700h4.500l1.500 1.900h5.700v9.800z" fill="url(#dth)" stroke="#808080" stroke-width="1"/><path d="M468.8 255.2h11.500" stroke="#fff" stroke-width="1"/><path d="M468.5 264.2h13.400v-10" fill="none" stroke="#000" stroke-width="1.400"/></g><line x1="476" y1="274.5" x2="487" y2="274.5" stroke="#8c8c8c" stroke-width="1" stroke-dasharray="1 1"/><g fill="none"><path d="M487.2 267v14" stroke="#000" stroke-width="1.600" stroke-dasharray="1 1"/><path d="M488.8 282.4h13" stroke="#000" stroke-width="1.400" stroke-dasharray="1 1"/><path d="M488.2 267v14.300h13.600" stroke="#000" stroke-width="1.200"/><path d="M488.5 277.5l4.400 -4.200 3.400 3.700 5.700 -5.700" stroke="#000" stroke-width="1" stroke-dasharray="1 1"/><path d="M488.5 276.5l4.400 -4.200 3.400 3.700 5.700 -5.700" stroke="#000" stroke-width="1.100"/><path d="M488 275.5l4.400 -4.200 3.400 3.700 5.700 -5.700" stroke="#00d800" stroke-width="1.050"/><path d="M497.2 280l4.800 -4.200" stroke="#000" stroke-width="1.100"/><path d="M488 271.3l8.500 8.200 5 -4.300" stroke="#f0ec00" stroke-width="1.050"/></g><line x1="476" y1="290.5" x2="487" y2="290.5" stroke="#8c8c8c" stroke-width="1" stroke-dasharray="1 1"/><g fill="none"><path d="M487.2 283v14" stroke="#000" stroke-width="1.600" stroke-dasharray="1 1"/><path d="M488.8 298.4h13" stroke="#000" stroke-width="1.400" stroke-dasharray="1 1"/><path d="M488.2 283v14.300h13.600" stroke="#000" stroke-width="1.200"/><path d="M488.5 293.5l4.400 -4.200 3.400 3.700 5.700 -5.700" stroke="#000" stroke-width="1" stroke-dasharray="1 1"/><path d="M488.5 292.5l4.400 -4.200 3.400 3.700 5.700 -5.700" stroke="#000" stroke-width="1.100"/><path d="M488 291.5l4.400 -4.200 3.400 3.700 5.700 -5.700" stroke="#00d800" stroke-width="1.050"/><path d="M497.2 296l4.800 -4.200" stroke="#000" stroke-width="1.100"/><path d="M488 287.3l8.500 8.200 5 -4.300" stroke="#f0ec00" stroke-width="1.050"/></g><line x1="476" y1="306.5" x2="487" y2="306.5" stroke="#8c8c8c" stroke-width="1" stroke-dasharray="1 1"/><g fill="none"><path d="M487.2 299v14" stroke="#000" stroke-width="1.600" stroke-dasharray="1 1"/><path d="M488.8 314.4h13" stroke="#000" stroke-width="1.400" stroke-dasharray="1 1"/><path d="M488.2 299v14.300h13.600" stroke="#000" stroke-width="1.200"/><path d="M488.5 309.5l4.400 -4.200 3.400 3.700 5.700 -5.700" stroke="#000" stroke-width="1" stroke-dasharray="1 1"/><path d="M488.5 308.5l4.400 -4.200 3.400 3.700 5.700 -5.700" stroke="#000" stroke-width="1.100"/><path d="M488 307.5l4.400 -4.200 3.400 3.700 5.700 -5.700" stroke="#00d800" stroke-width="1.050"/><path d="M497.2 312l4.800 -4.200" stroke="#000" stroke-width="1.100"/><path d="M488 303.3l8.500 8.200 5 -4.300" stroke="#f0ec00" stroke-width="1.050"/></g><line x1="476" y1="322.5" x2="487" y2="322.5" stroke="#8c8c8c" stroke-width="1" stroke-dasharray="1 1"/><g fill="none"><path d="M487.2 315v14" stroke="#000" stroke-width="1.600" stroke-dasharray="1 1"/><path d="M488.8 330.4h13" stroke="#000" stroke-width="1.400" stroke-dasharray="1 1"/><path d="M488.2 315v14.300h13.600" stroke="#000" stroke-width="1.200"/><path d="M488.5 325.5l4.400 -4.200 3.400 3.700 5.700 -5.700" stroke="#000" stroke-width="1" stroke-dasharray="1 1"/><path d="M488.5 324.5l4.400 -4.200 3.400 3.700 5.700 -5.700" stroke="#000" stroke-width="1.100"/><path d="M488 323.5l4.400 -4.200 3.400 3.700 5.700 -5.700" stroke="#00d800" stroke-width="1.050"/><path d="M497.2 328l4.800 -4.200" stroke="#000" stroke-width="1.100"/><path d="M488 319.3l8.500 8.200 5 -4.300" stroke="#f0ec00" stroke-width="1.050"/></g><line x1="476" y1="338.5" x2="487" y2="338.5" stroke="#8c8c8c" stroke-width="1" stroke-dasharray="1 1"/><g fill="none"><path d="M487.2 331v14" stroke="#000" stroke-width="1.600" stroke-dasharray="1 1"/><path d="M488.8 346.4h13" stroke="#000" stroke-width="1.400" stroke-dasharray="1 1"/><path d="M488.2 331v14.300h13.600" stroke="#000" stroke-width="1.200"/><path d="M488.5 341.5l4.400 -4.200 3.400 3.700 5.700 -5.700" stroke="#000" stroke-width="1" stroke-dasharray="1 1"/><path d="M488.5 340.5l4.400 -4.200 3.400 3.700 5.700 -5.700" stroke="#000" stroke-width="1.100"/><path d="M488 339.5l4.400 -4.200 3.400 3.700 5.700 -5.700" stroke="#00d800" stroke-width="1.050"/><path d="M497.2 344l4.800 -4.200" stroke="#000" stroke-width="1.100"/><path d="M488 335.3l8.500 8.200 5 -4.300" stroke="#f0ec00" stroke-width="1.050"/></g><line x1="476" y1="354.5" x2="487" y2="354.5" stroke="#8c8c8c" stroke-width="1" stroke-dasharray="1 1"/><g fill="none"><path d="M487.2 347v14" stroke="#000" stroke-width="1.600" stroke-dasharray="1 1"/><path d="M488.8 362.4h13" stroke="#000" stroke-width="1.400" stroke-dasharray="1 1"/><path d="M488.2 347v14.300h13.600" stroke="#000" stroke-width="1.200"/><path d="M488.5 357.5l4.400 -4.200 3.400 3.700 5.700 -5.700" stroke="#000" stroke-width="1" stroke-dasharray="1 1"/><path d="M488.5 356.5l4.400 -4.200 3.400 3.700 5.700 -5.700" stroke="#000" stroke-width="1.100"/><path d="M488 355.5l4.400 -4.200 3.400 3.700 5.700 -5.700" stroke="#00d800" stroke-width="1.050"/><path d="M497.2 360l4.800 -4.200" stroke="#000" stroke-width="1.100"/><path d="M488 351.3l8.500 8.200 5 -4.300" stroke="#f0ec00" stroke-width="1.050"/></g><line x1="476" y1="370.5" x2="487" y2="370.5" stroke="#8c8c8c" stroke-width="1" stroke-dasharray="1 1"/><g fill="none"><path d="M487.2 363v14" stroke="#000" stroke-width="1.600" stroke-dasharray="1 1"/><path d="M488.8 378.4h13" stroke="#000" stroke-width="1.400" stroke-dasharray="1 1"/><path d="M488.2 363v14.300h13.600" stroke="#000" stroke-width="1.200"/><path d="M488.5 373.5l4.400 -4.200 3.400 3.700 5.700 -5.700" stroke="#000" stroke-width="1" stroke-dasharray="1 1"/><path d="M488.5 372.5l4.400 -4.200 3.400 3.700 5.700 -5.700" stroke="#000" stroke-width="1.100"/><path d="M488 371.5l4.400 -4.200 3.400 3.700 5.700 -5.700" stroke="#00d800" stroke-width="1.050"/><path d="M497.2 376l4.800 -4.200" stroke="#000" stroke-width="1.100"/><path d="M488 367.3l8.500 8.200 5 -4.300" stroke="#f0ec00" stroke-width="1.050"/></g><line x1="476" y1="386.5" x2="487" y2="386.5" stroke="#8c8c8c" stroke-width="1" stroke-dasharray="1 1"/><g fill="none"><path d="M487.2 379v14" stroke="#000" stroke-width="1.600" stroke-dasharray="1 1"/><path d="M488.8 394.4h13" stroke="#000" stroke-width="1.400" stroke-dasharray="1 1"/><path d="M488.2 379v14.300h13.600" stroke="#000" stroke-width="1.200"/><path d="M488.5 389.5l4.400 -4.200 3.400 3.700 5.700 -5.700" stroke="#000" stroke-width="1" stroke-dasharray="1 1"/><path d="M488.5 388.5l4.400 -4.200 3.400 3.700 5.700 -5.700" stroke="#000" stroke-width="1.100"/><path d="M488 387.5l4.400 -4.200 3.400 3.700 5.700 -5.700" stroke="#00d800" stroke-width="1.050"/><path d="M497.2 392l4.800 -4.200" stroke="#000" stroke-width="1.100"/><path d="M488 383.3l8.500 8.200 5 -4.300" stroke="#f0ec00" stroke-width="1.050"/></g><line x1="476" y1="402.5" x2="487" y2="402.5" stroke="#8c8c8c" stroke-width="1" stroke-dasharray="1 1"/><g fill="none"><path d="M487.2 395v14" stroke="#000" stroke-width="1.600" stroke-dasharray="1 1"/><path d="M488.8 410.4h13" stroke="#000" stroke-width="1.400" stroke-dasharray="1 1"/><path d="M488.2 395v14.300h13.600" stroke="#000" stroke-width="1.200"/><path d="M488.5 405.5l4.400 -4.200 3.400 3.700 5.700 -5.700" stroke="#000" stroke-width="1" stroke-dasharray="1 1"/><path d="M488.5 404.5l4.400 -4.200 3.400 3.700 5.700 -5.700" stroke="#000" stroke-width="1.100"/><path d="M488 403.5l4.400 -4.200 3.400 3.700 5.700 -5.700" stroke="#00d800" stroke-width="1.050"/><path d="M497.2 408l4.800 -4.200" stroke="#000" stroke-width="1.100"/><path d="M488 399.3l8.500 8.200 5 -4.300" stroke="#f0ec00" stroke-width="1.050"/></g><line x1="476" y1="418.5" x2="487" y2="418.5" stroke="#8c8c8c" stroke-width="1" stroke-dasharray="1 1"/><g fill="none"><path d="M487.2 411v14" stroke="#000" stroke-width="1.600" stroke-dasharray="1 1"/><path d="M488.8 426.4h13" stroke="#000" stroke-width="1.400" stroke-dasharray="1 1"/><path d="M488.2 411v14.300h13.600" stroke="#000" stroke-width="1.200"/><path d="M488.5 421.5l4.400 -4.200 3.400 3.700 5.700 -5.700" stroke="#000" stroke-width="1" stroke-dasharray="1 1"/><path d="M488.5 420.5l4.400 -4.200 3.400 3.700 5.700 -5.700" stroke="#000" stroke-width="1.100"/><path d="M488 419.5l4.400 -4.200 3.400 3.700 5.700 -5.700" stroke="#00d800" stroke-width="1.050"/><path d="M497.2 424l4.800 -4.200" stroke="#000" stroke-width="1.100"/><path d="M488 415.3l8.500 8.200 5 -4.300" stroke="#f0ec00" stroke-width="1.050"/></g><line x1="476" y1="434.5" x2="487" y2="434.5" stroke="#8c8c8c" stroke-width="1" stroke-dasharray="1 1"/><g fill="none"><path d="M487.2 427v14" stroke="#000" stroke-width="1.600" stroke-dasharray="1 1"/><path d="M488.8 442.4h13" stroke="#000" stroke-width="1.400" stroke-dasharray="1 1"/><path d="M488.2 427v14.300h13.600" stroke="#000" stroke-width="1.200"/><path d="M488.5 437.5l4.400 -4.200 3.400 3.700 5.700 -5.700" stroke="#000" stroke-width="1" stroke-dasharray="1 1"/><path d="M488.5 436.5l4.400 -4.200 3.400 3.700 5.700 -5.700" stroke="#000" stroke-width="1.100"/><path d="M488 435.5l4.400 -4.200 3.400 3.700 5.700 -5.700" stroke="#00d800" stroke-width="1.050"/><path d="M497.2 440l4.800 -4.200" stroke="#000" stroke-width="1.100"/><path d="M488 431.3l8.500 8.200 5 -4.300" stroke="#f0ec00" stroke-width="1.050"/></g><line x1="476" y1="450.5" x2="487" y2="450.5" stroke="#8c8c8c" stroke-width="1" stroke-dasharray="1 1"/><g fill="none"><path d="M487.2 443v14" stroke="#000" stroke-width="1.600" stroke-dasharray="1 1"/><path d="M488.8 458.4h13" stroke="#000" stroke-width="1.400" stroke-dasharray="1 1"/><path d="M488.2 443v14.300h13.600" stroke="#000" stroke-width="1.200"/><path d="M488.5 453.5l4.400 -4.200 3.400 3.700 5.700 -5.700" stroke="#000" stroke-width="1" stroke-dasharray="1 1"/><path d="M488.5 452.5l4.400 -4.200 3.400 3.700 5.700 -5.700" stroke="#000" stroke-width="1.100"/><path d="M488 451.5l4.400 -4.200 3.400 3.700 5.700 -5.700" stroke="#00d800" stroke-width="1.050"/><path d="M497.2 456l4.800 -4.200" stroke="#000" stroke-width="1.100"/><path d="M488 447.3l8.500 8.200 5 -4.300" stroke="#f0ec00" stroke-width="1.050"/></g><line x1="476" y1="466.5" x2="487" y2="466.5" stroke="#8c8c8c" stroke-width="1" stroke-dasharray="1 1"/><g fill="none"><path d="M487.2 459v14" stroke="#000" stroke-width="1.600" stroke-dasharray="1 1"/><path d="M488.8 474.4h13" stroke="#000" stroke-width="1.400" stroke-dasharray="1 1"/><path d="M488.2 459v14.300h13.600" stroke="#000" stroke-width="1.200"/><path d="M488.5 469.5l4.400 -4.200 3.400 3.700 5.700 -5.700" stroke="#000" stroke-width="1" stroke-dasharray="1 1"/><path d="M488.5 468.5l4.400 -4.200 3.400 3.700 5.700 -5.700" stroke="#000" stroke-width="1.100"/><path d="M488 467.5l4.400 -4.200 3.400 3.700 5.700 -5.700" stroke="#00d800" stroke-width="1.050"/><path d="M497.2 472l4.800 -4.200" stroke="#000" stroke-width="1.100"/><path d="M488 463.3l8.500 8.200 5 -4.300" stroke="#f0ec00" stroke-width="1.050"/></g><line x1="476" y1="482.5" x2="487" y2="482.5" stroke="#8c8c8c" stroke-width="1" stroke-dasharray="1 1"/><g fill="none"><path d="M487.2 475v14" stroke="#000" stroke-width="1.600" stroke-dasharray="1 1"/><path d="M488.8 490.4h13" stroke="#000" stroke-width="1.400" stroke-dasharray="1 1"/><path d="M488.2 475v14.300h13.600" stroke="#000" stroke-width="1.200"/><path d="M488.5 485.5l4.400 -4.200 3.400 3.700 5.700 -5.700" stroke="#000" stroke-width="1" stroke-dasharray="1 1"/><path d="M488.5 484.5l4.400 -4.200 3.400 3.700 5.700 -5.700" stroke="#000" stroke-width="1.100"/><path d="M488 483.5l4.400 -4.200 3.400 3.700 5.700 -5.700" stroke="#00d800" stroke-width="1.050"/><path d="M497.2 488l4.800 -4.200" stroke="#000" stroke-width="1.100"/><path d="M488 479.3l8.500 8.200 5 -4.300" stroke="#f0ec00" stroke-width="1.050"/></g><line x1="476" y1="498.5" x2="487" y2="498.5" stroke="#8c8c8c" stroke-width="1" stroke-dasharray="1 1"/><g fill="none"><path d="M487.2 491v14" stroke="#000" stroke-width="1.600" stroke-dasharray="1 1"/><path d="M488.8 506.4h13" stroke="#000" stroke-width="1.400" stroke-dasharray="1 1"/><path d="M488.2 491v14.300h13.600" stroke="#000" stroke-width="1.200"/><path d="M488.5 501.5l4.400 -4.200 3.400 3.700 5.700 -5.700" stroke="#000" stroke-width="1" stroke-dasharray="1 1"/><path d="M488.5 500.5l4.400 -4.200 3.400 3.700 5.700 -5.700" stroke="#000" stroke-width="1.100"/><path d="M488 499.5l4.400 -4.200 3.400 3.700 5.700 -5.700" stroke="#00d800" stroke-width="1.050"/><path d="M497.2 504l4.800 -4.200" stroke="#000" stroke-width="1.100"/><path d="M488 495.3l8.500 8.200 5 -4.300" stroke="#f0ec00" stroke-width="1.050"/></g><line x1="476" y1="514.5" x2="487" y2="514.5" stroke="#8c8c8c" stroke-width="1" stroke-dasharray="1 1"/><g fill="none"><path d="M487.2 507v14" stroke="#000" stroke-width="1.600" stroke-dasharray="1 1"/><path d="M488.8 522.4h13" stroke="#000" stroke-width="1.400" stroke-dasharray="1 1"/><path d="M488.2 507v14.300h13.600" stroke="#000" stroke-width="1.200"/><path d="M488.5 517.5l4.400 -4.200 3.400 3.700 5.700 -5.700" stroke="#000" stroke-width="1" stroke-dasharray="1 1"/><path d="M488.5 516.5l4.400 -4.200 3.400 3.700 5.700 -5.700" stroke="#000" stroke-width="1.100"/><path d="M488 515.5l4.400 -4.200 3.400 3.700 5.700 -5.700" stroke="#00d800" stroke-width="1.050"/><path d="M497.2 520l4.800 -4.200" stroke="#000" stroke-width="1.100"/><path d="M488 511.3l8.500 8.200 5 -4.300" stroke="#f0ec00" stroke-width="1.050"/></g><line x1="476" y1="530.5" x2="487" y2="530.5" stroke="#8c8c8c" stroke-width="1" stroke-dasharray="1 1"/><g fill="none"><path d="M487.2 523v14" stroke="#000" stroke-width="1.600" stroke-dasharray="1 1"/><path d="M488.8 538.4h13" stroke="#000" stroke-width="1.400" stroke-dasharray="1 1"/><path d="M488.2 523v14.300h13.600" stroke="#000" stroke-width="1.200"/><path d="M488.5 533.5l4.400 -4.200 3.400 3.700 5.700 -5.700" stroke="#000" stroke-width="1" stroke-dasharray="1 1"/><path d="M488.5 532.5l4.400 -4.200 3.400 3.700 5.700 -5.700" stroke="#000" stroke-width="1.100"/><path d="M488 531.5l4.400 -4.200 3.400 3.700 5.700 -5.700" stroke="#00d800" stroke-width="1.050"/><path d="M497.2 536l4.800 -4.200" stroke="#000" stroke-width="1.100"/><path d="M488 527.3l8.500 8.200 5 -4.300" stroke="#f0ec00" stroke-width="1.050"/></g><line x1="461" y1="546.5" x2="467" y2="546.5" stroke="#8c8c8c" stroke-width="1" stroke-dasharray="1 1"/><rect x="452.5" y="542.5" width="8" height="8" fill="#fff" stroke="#808080"/><line x1="454" y1="546.5" x2="459" y2="546.5" stroke="#000"/><line x1="456.5" y1="544" x2="456.5" y2="549" stroke="#000"/><g><path d="M467.8 551.5V541.5l1.500 -1.700h4.500l1.500 1.900h5.700v9.800z" fill="url(#dth)" stroke="#808080" stroke-width="1"/><path d="M468.8 543.2h11.500" stroke="#fff" stroke-width="1"/><path d="M468.5 552.2h13.400v-10" fill="none" stroke="#000" stroke-width="1.400"/></g><line x1="461" y1="562.5" x2="467" y2="562.5" stroke="#8c8c8c" stroke-width="1" stroke-dasharray="1 1"/><rect x="452.5" y="558.5" width="8" height="8" fill="#fff" stroke="#808080"/><line x1="454" y1="562.5" x2="459" y2="562.5" stroke="#000"/><line x1="456.5" y1="560" x2="456.5" y2="565" stroke="#000"/><g><path d="M467.8 567.5V557.5l1.500 -1.700h4.500l1.500 1.900h5.700v9.800z" fill="url(#dth)" stroke="#808080" stroke-width="1"/><path d="M468.8 559.2h11.500" stroke="#fff" stroke-width="1"/><path d="M468.5 568.2h13.400v-10" fill="none" stroke="#000" stroke-width="1.400"/></g><line x1="461" y1="578.5" x2="467" y2="578.5" stroke="#8c8c8c" stroke-width="1" stroke-dasharray="1 1"/><rect x="452.5" y="574.5" width="8" height="8" fill="#fff" stroke="#808080"/><line x1="454" y1="578.5" x2="459" y2="578.5" stroke="#000"/><line x1="456.5" y1="576" x2="456.5" y2="581" stroke="#000"/><g><path d="M467.8 583.5V573.5l1.500 -1.700h4.500l1.500 1.900h5.700v9.800z" fill="url(#dth)" stroke="#808080" stroke-width="1"/><path d="M468.8 575.2h11.500" stroke="#fff" stroke-width="1"/><path d="M468.5 584.2h13.400v-10" fill="none" stroke="#000" stroke-width="1.400"/></g><line x1="461" y1="594.5" x2="467" y2="594.5" stroke="#8c8c8c" stroke-width="1" stroke-dasharray="1 1"/><rect x="452.5" y="590.5" width="8" height="8" fill="#fff" stroke="#808080"/><line x1="454" y1="594.5" x2="459" y2="594.5" stroke="#000"/><line x1="456.5" y1="592" x2="456.5" y2="597" stroke="#000"/><g><path d="M467.8 599.5V589.5l1.500 -1.700h4.500l1.500 1.900h5.700v9.800z" fill="url(#dth)" stroke="#808080" stroke-width="1"/><path d="M468.8 591.2h11.500" stroke="#fff" stroke-width="1"/><path d="M468.5 600.2h13.400v-10" fill="none" stroke="#000" stroke-width="1.400"/></g><line x1="461" y1="610.5" x2="467" y2="610.5" stroke="#8c8c8c" stroke-width="1" stroke-dasharray="1 1"/><rect x="452.5" y="606.5" width="8" height="8" fill="#fff" stroke="#808080"/><line x1="454" y1="610.5" x2="459" y2="610.5" stroke="#000"/><line x1="456.5" y1="608" x2="456.5" y2="613" stroke="#000"/><g><path d="M467.8 615.5V605.5l1.500 -1.700h4.500l1.500 1.900h5.700v9.800z" fill="url(#dth)" stroke="#808080" stroke-width="1"/><path d="M468.8 607.2h11.500" stroke="#fff" stroke-width="1"/><path d="M468.5 616.2h13.400v-10" fill="none" stroke="#000" stroke-width="1.400"/></g><line x1="461" y1="626.5" x2="467" y2="626.5" stroke="#8c8c8c" stroke-width="1" stroke-dasharray="1 1"/><rect x="452.5" y="622.5" width="8" height="8" fill="#fff" stroke="#808080"/><line x1="454" y1="626.5" x2="459" y2="626.5" stroke="#000"/><line x1="456.5" y1="624" x2="456.5" y2="629" stroke="#000"/><g><path d="M467.8 631.5V621.5l1.500 -1.700h4.500l1.500 1.900h5.700v9.800z" fill="url(#dth)" stroke="#808080" stroke-width="1"/><path d="M468.8 623.2h11.500" stroke="#fff" stroke-width="1"/><path d="M468.5 632.2h13.400v-10" fill="none" stroke="#000" stroke-width="1.400"/></g><line x1="461" y1="642.5" x2="467" y2="642.5" stroke="#8c8c8c" stroke-width="1" stroke-dasharray="1 1"/><rect x="452.5" y="638.5" width="8" height="8" fill="#fff" stroke="#808080"/><line x1="454" y1="642.5" x2="459" y2="642.5" stroke="#000"/><line x1="456.5" y1="640" x2="456.5" y2="645" stroke="#000"/><g><path d="M467.8 647.5V637.5l1.500 -1.700h4.500l1.500 1.900h5.700v9.800z" fill="url(#dth)" stroke="#808080" stroke-width="1"/><path d="M468.8 639.2h11.500" stroke="#fff" stroke-width="1"/><path d="M468.5 648.2h13.400v-10" fill="none" stroke="#000" stroke-width="1.400"/></g><line x1="461" y1="658.5" x2="467" y2="658.5" stroke="#8c8c8c" stroke-width="1" stroke-dasharray="1 1"/><rect x="452.5" y="654.5" width="8" height="8" fill="#fff" stroke="#808080"/><line x1="454" y1="658.5" x2="459" y2="658.5" stroke="#000"/><line x1="456.5" y1="656" x2="456.5" y2="661" stroke="#000"/><g><path d="M467.8 663.5V653.5l1.500 -1.700h4.500l1.500 1.900h5.700v9.800z" fill="url(#dth)" stroke="#808080" stroke-width="1"/><path d="M468.8 655.2h11.500" stroke="#fff" stroke-width="1"/><path d="M468.5 664.2h13.400v-10" fill="none" stroke="#000" stroke-width="1.400"/></g></svg>
<div class="t st" style="left:451px;top:203.5px;font-weight:900;font-size:13.600px">遥测曲线</div>
<div class="t st tr" style="left:470px;top:220.0px">虹创</div>
<div class="t st tr" style="left:489px;top:236.0px"><span class="lat" style="width:35.00px">1AH1 </span>进线<span class="lat" style="width:7.00px">I</span></div>
<div class="t st tr" style="left:489px;top:252.0px"><span class="lat" style="width:49.00px">1AH2 1#</span>变压器</div>
<div class="t st tr" style="left:507px;top:268.0px"><span class="lat" style="width:14.00px">Ia</span></div>
<div class="t st tr" style="left:507px;top:284.0px"><span class="lat" style="width:14.00px">Ib</span></div>
<div class="t st tr" style="left:507px;top:300.0px"><span class="lat" style="width:14.00px">Ic</span></div>
<div class="t st tr" style="left:507px;top:316.0px"><span class="lat" style="width:21.00px">I01</span></div>
<div class="t st tr" style="left:507px;top:332.0px"><span class="lat" style="width:21.00px">I02</span></div>
<div class="t st tr" style="left:507px;top:348.0px"><span class="lat" style="width:14.00px">IA</span></div>
<div class="t st tr" style="left:507px;top:364.0px"><span class="lat" style="width:14.00px">IB</span></div>
<div class="t st tr" style="left:507px;top:380.0px"><span class="lat" style="width:14.00px">IC</span></div>
<div class="t st tr" style="left:507px;top:396.0px"><span class="lat" style="width:21.00px">UAB</span></div>
<div class="t st tr" style="left:507px;top:412.0px"><span class="lat" style="width:21.00px">UBC</span></div>
<div class="t st tr" style="left:507px;top:428.0px"><span class="lat" style="width:21.00px">UCA</span></div>
<div class="t st tr" style="left:507px;top:444.0px"><span class="lat" style="width:14.00px">U4</span></div>
<div class="t st tr" style="left:507px;top:460.0px"><span class="lat" style="width:14.00px">Fr</span></div>
<div class="t st tr" style="left:507px;top:476.0px"><span class="lat" style="width:7.00px">P</span></div>
<div class="t st tr" style="left:507px;top:492.0px"><span class="lat" style="width:14.00px">PF</span></div>
<div class="t st tr" style="left:507px;top:508.0px"><span class="lat" style="width:7.00px">Q</span></div>
<div class="t st tr" style="left:507px;top:524.0px">有功电度</div>
<div class="t st tr" style="left:489px;top:540.0px"><span class="lat" style="width:49.00px">1AH3 2#</span>变压器</div>
<div class="t st tr" style="left:489px;top:556.0px"><span class="lat" style="width:49.00px">1AH4 1#</span>高压电机</div>
<div class="t st tr" style="left:489px;top:572.0px"><span class="lat" style="width:49.00px">1AH5 2#</span>高压电机</div>
<div class="t st tr" style="left:489px;top:588.0px"><span class="lat" style="width:35.00px">2AH1 </span>进线<span class="lat" style="width:14.00px">II</span></div>
<div class="t st tr" style="left:489px;top:604.0px"><span class="lat" style="width:49.00px">2AH2 3#</span>变压器</div>
<div class="t st tr" style="left:489px;top:620.0px"><span class="lat" style="width:49.00px">2AH3 4#</span>变压器</div>
<div class="t st tr" style="left:489px;top:636.0px"><span class="lat" style="width:49.00px">2AH4 3#</span>高压电机</div>
<div class="t st tr" style="left:489px;top:652.0px"><span class="lat" style="width:49.00px">2AH5 4#</span>高压电机</div>
<div class="gb" style="left:654px;top:213px;width:185px;height:69px"></div>
<div class="gbl st" style="left:662px;top:208.500px">曲线时间</div>
<div class="t st lb" style="left:663px;top:227px">起始日期<span class="lat" style="width:7.00px">:</span></div>
<div class="t st lb" style="left:663px;top:257.500px">结束日期<span class="lat" style="width:7.00px">:</span></div>
<div class="sunk" style="left:727px;top:225px;width:106px;height:17px"></div>
<div class="t" style="left:731px;top:228.5px;font-size:12.500px;font-family:'Liberation Sans','Noto Sans CJK SC',sans-serif">2022年  3月11</div>
<div class="btn3" style="left:816px;top:227px;width:15px;height:13px"></div>
<svg class="abs" style="left:820px;top:232px" width="7" height="4"><path d="M0 0h7l-3.500 4z" fill="#000"/></svg>
<div class="sunk" style="left:727px;top:256px;width:106px;height:17px"></div>
<div class="t" style="left:731px;top:259.5px;font-size:12.500px;font-family:'Liberation Sans','Noto Sans CJK SC',sans-serif">2022年  3月11</div>
<div class="btn3" style="left:816px;top:258px;width:15px;height:13px"></div>
<svg class="abs" style="left:820px;top:263px" width="7" height="4"><path d="M0 0h7l-3.500 4z" fill="#000"/></svg>
<div class="gb" style="left:654px;top:291px;width:185px;height:58px"></div>
<div class="gbl st" style="left:662px;top:286.500px">显示方式</div>
<div class="t st lb" style="left:663px;top:304px">取值周期<span class="lat" style="width:7.00px">:</span></div>
<div class="sunk" style="left:743px;top:300px;width:65px;height:19px"></div>
<div class="t st" style="left:747px;top:304px"><span class="lat" style="width:14.00px">05</span>分钟</div>
<div class="btn3" style="left:791px;top:302px;width:15px;height:15px"></div>
<svg class="abs" style="left:795px;top:308px" width="7" height="4"><path d="M0 0h7l-3.500 4z" fill="#000"/></svg>
<div class="sunk" style="left:661px;top:328px;width:12px;height:12px"></div>
<svg class="abs" style="left:663px;top:330px" width="8" height="8"><path d="M.5 3.500l2.500 2.500 4.500 -5" fill="none" stroke="#000" stroke-width="1.600"/></svg>
<div class="t st lb" style="left:680px;top:329px">鼠标捕捉</div>
<div class="sunk" style="left:743px;top:328px;width:12px;height:12px"></div>
<div class="t st lb" style="left:761px;top:329px">显示最值</div>
<div class="btn3 st lb" style="left:655px;top:351px;width:58px;height:21px;line-height:21.500px">查询</div>
<div class="btn3 st lb" style="left:715px;top:351px;width:58px;height:21px;line-height:21.500px">关闭</div>
<div class="btn3 st lb" style="left:774px;top:351px;width:58px;height:21px;line-height:21.500px">打印</div>
<div class="gb" style="left:849px;top:211px;width:654px;height:161px"></div>
<div class="gbl st" style="left:856px;top:206px">曲线属性</div>
<div class="abs" style="left:850px;top:226px;width:650px;height:138px;background:#fff;border-left:1px solid #6a6a6a;border-top:1px solid #6a6a6a"></div>
<div class="abs" style="left:851px;top:347px;width:649px;height:17px;background:#f0f0f0"></div>
<div class="abs" style="left:867px;top:354px;width:418px;height:2px;background:#8a8a8a;border-radius:1px"></div>
<div class="abs st" style="left:851px;top:227px;width:58px;height:17px;background:#f0f0f0;border:1px solid;border-color:#fff #6e6e6e #6e6e6e #fff;box-shadow:inset -1px -1px 0 #a8a8a8;padding-left:5px;line-height:16px;white-space:pre;overflow:hidden">索引号</div>
<div class="abs st" style="left:909px;top:227px;width:41px;height:17px;background:#f0f0f0;border:1px solid;border-color:#fff #6e6e6e #6e6e6e #fff;box-shadow:inset -1px -1px 0 #a8a8a8;padding-left:5px;line-height:16px;white-space:pre;overflow:hidden">颜色</div>
<div class="abs st" style="left:950px;top:227px;width:120px;height:17px;background:#f0f0f0;border:1px solid;border-color:#fff #6e6e6e #6e6e6e #fff;box-shadow:inset -1px -1px 0 #a8a8a8;padding-left:5px;line-height:16px;white-space:pre;overflow:hidden">厂站名</div>
<div class="abs st" style="left:1070px;top:227px;width:120px;height:17px;background:#f0f0f0;border:1px solid;border-color:#fff #6e6e6e #6e6e6e #fff;box-shadow:inset -1px -1px 0 #a8a8a8;padding-left:5px;line-height:16px;white-space:pre;overflow:hidden">设备名</div>
<div class="abs st" style="left:1190px;top:227px;width:120px;height:17px;background:#f0f0f0;border:1px solid;border-color:#fff #6e6e6e #6e6e6e #fff;box-shadow:inset -1px -1px 0 #a8a8a8;padding-left:5px;line-height:16px;white-space:pre;overflow:hidden">曲线名</div>
<div class="abs st" style="left:1310px;top:227px;width:60px;height:17px;background:#f0f0f0;border:1px solid;border-color:#fff #6e6e6e #6e6e6e #fff;box-shadow:inset -1px -1px 0 #a8a8a8;padding-left:5px;line-height:16px;white-space:pre;overflow:hidden">最大值</div>
<div class="abs st" style="left:1370px;top:227px;width:130px;height:17px;background:#f0f0f0;border:1px solid;border-color:#fff #6e6e6e #6e6e6e #fff;box-shadow:inset -1px -1px 0 #a8a8a8;padding-left:5px;line-height:16px;white-space:pre;overflow:hidden">发生时间</div>
<div class="abs" style="left:851px;top:262.0px;width:649px;height:1px;background:#ededed"></div>
<div class="abs" style="left:851px;top:279.0px;width:649px;height:1px;background:#ededed"></div>
<div class="abs" style="left:851px;top:296.0px;width:649px;height:1px;background:#ededed"></div>
<div class="abs" style="left:851px;top:313.0px;width:649px;height:1px;background:#ededed"></div>
<div class="abs" style="left:851px;top:330.0px;width:649px;height:1px;background:#ededed"></div>
<div class="abs" style="left:909px;top:244px;width:1px;height:103px;background:#ededed"></div>
<div class="abs" style="left:950px;top:244px;width:1px;height:103px;background:#ededed"></div>
<div class="abs" style="left:1070px;top:244px;width:1px;height:103px;background:#ededed"></div>
<div class="abs" style="left:1190px;top:244px;width:1px;height:103px;background:#ededed"></div>
<div class="abs" style="left:1310px;top:244px;width:1px;height:103px;background:#ededed"></div>
<div class="abs" style="left:1370px;top:244px;width:1px;height:103px;background:#ededed"></div>
<div class="abs" style="left:910px;top:245px;width:40px;height:17px;background:#0a7ccc"></div>
<div class="abs" style="left:854px;top:248px;width:13px;height:13px;background:#fff;border:1.500px solid #2a2a2a"></div>
<svg class="abs" style="left:856px;top:250px" width="9" height="9"><path d="M1 4l2.500 3 4.500 -6" fill="none" stroke="#000" stroke-width="1.700"/></svg>
<div class="t st" style="left:871px;top:249px"><span class="lat" style="width:7.00px">1</span></div>
<div class="t st" style="left:956px;top:249px">虹创</div>
<div class="t st" style="left:1076px;top:249px"><span class="lat" style="width:49.00px">1AH2 1#</span>变压器</div>
<div class="t st" style="left:1196px;top:249px"><span class="lat" style="width:21.00px">UAB</span></div>
<div class="t st" style="left:1316px;top:249px"><span class="lat" style="width:35.00px">10.45</span></div>
<div class="t st" style="left:1376px;top:249px"><span class="lat" style="width:28.00px">2022</span>年<span class="lat" style="width:7.00px">3</span>月<span class="lat" style="width:14.00px">11</span>日<span class="lat" style="width:14.00px">01</span>时<span class="lat" style="width:7.00px">2</span></div>
<div class="abs" style="left:659px;top:373px;width:844.500px;height:534px;background:#fff"></div>
<svg class="abs" style="left:659px;top:373px" width="845" height="534" viewBox="659 373 845 534"><line x1="741.7" y1="434.5" x2="741.7" y2="843.5" stroke="#b8b8b8" stroke-width="1" stroke-dasharray="3 3"/><line x1="772.6" y1="434.5" x2="772.6" y2="843.5" stroke="#b8b8b8" stroke-width="1" stroke-dasharray="3 3"/><line x1="803.6" y1="434.5" x2="803.6" y2="843.5" stroke="#b8b8b8" stroke-width="1" stroke-dasharray="3 3"/><line x1="834.5" y1="434.5" x2="834.5" y2="843.5" stroke="#b8b8b8" stroke-width="1" stroke-dasharray="3 3"/><line x1="865.5" y1="434.5" x2="865.5" y2="843.5" stroke="#b8b8b8" stroke-width="1" stroke-dasharray="3 3"/><line x1="896.5" y1="434.5" x2="896.5" y2="843.5" stroke="#b8b8b8" stroke-width="1" stroke-dasharray="3 3"/><line x1="927.4" y1="434.5" x2="927.4" y2="843.5" stroke="#b8b8b8" stroke-width="1" stroke-dasharray="3 3"/><line x1="958.4" y1="434.5" x2="958.4" y2="843.5" stroke="#b8b8b8" stroke-width="1" stroke-dasharray="3 3"/><line x1="989.3" y1="434.5" x2="989.3" y2="843.5" stroke="#b8b8b8" stroke-width="1" stroke-dasharray="3 3"/><line x1="1020.3" y1="434.5" x2="1020.3" y2="843.5" stroke="#b8b8b8" stroke-width="1" stroke-dasharray="3 3"/><line x1="1051.2" y1="434.5" x2="1051.2" y2="843.5" stroke="#b8b8b8" stroke-width="1" stroke-dasharray="3 3"/><line x1="1082.2" y1="434.5" x2="1082.2" y2="843.5" stroke="#b8b8b8" stroke-width="1" stroke-dasharray="3 3"/><line x1="1113.2" y1="434.5" x2="1113.2" y2="843.5" stroke="#b8b8b8" stroke-width="1" stroke-dasharray="3 3"/><line x1="1144.1" y1="434.5" x2="1144.1" y2="843.5" stroke="#b8b8b8" stroke-width="1" stroke-dasharray="3 3"/><line x1="1175.1" y1="434.5" x2="1175.1" y2="843.5" stroke="#b8b8b8" stroke-width="1" stroke-dasharray="3 3"/><line x1="1206.0" y1="434.5" x2="1206.0" y2="843.5" stroke="#b8b8b8" stroke-width="1" stroke-dasharray="3 3"/><line x1="1237.0" y1="434.5" x2="1237.0" y2="843.5" stroke="#b8b8b8" stroke-width="1" stroke-dasharray="3 3"/><line x1="1268.0" y1="434.5" x2="1268.0" y2="843.5" stroke="#b8b8b8" stroke-width="1" stroke-dasharray="3 3"/><line x1="1298.9" y1="434.5" x2="1298.9" y2="843.5" stroke="#b8b8b8" stroke-width="1" stroke-dasharray="3 3"/><line x1="1329.9" y1="434.5" x2="1329.9" y2="843.5" stroke="#b8b8b8" stroke-width="1" stroke-dasharray="3 3"/><line x1="1360.8" y1="434.5" x2="1360.8" y2="843.5" stroke="#b8b8b8" stroke-width="1" stroke-dasharray="3 3"/><line x1="1391.8" y1="434.5" x2="1391.8" y2="843.5" stroke="#b8b8b8" stroke-width="1" stroke-dasharray="3 3"/><line x1="1422.7" y1="434.5" x2="1422.7" y2="843.5" stroke="#b8b8b8" stroke-width="1" stroke-dasharray="3 3"/><line x1="710.7" y1="475.4" x2="1453.7" y2="475.4" stroke="#b8b8b8" stroke-width="1" stroke-dasharray="3 3"/><line x1="710.7" y1="516.3" x2="1453.7" y2="516.3" stroke="#b8b8b8" stroke-width="1" stroke-dasharray="3 3"/><line x1="710.7" y1="557.2" x2="1453.7" y2="557.2" stroke="#b8b8b8" stroke-width="1" stroke-dasharray="3 3"/><line x1="710.7" y1="598.1" x2="1453.7" y2="598.1" stroke="#b8b8b8" stroke-width="1" stroke-dasharray="3 3"/><line x1="710.7" y1="639.0" x2="1453.7" y2="639.0" stroke="#b8b8b8" stroke-width="1" stroke-dasharray="3 3"/><line x1="710.7" y1="679.9" x2="1453.7" y2="679.9" stroke="#b8b8b8" stroke-width="1" stroke-dasharray="3 3"/><line x1="710.7" y1="720.8" x2="1453.7" y2="720.8" stroke="#b8b8b8" stroke-width="1" stroke-dasharray="3 3"/><line x1="710.7" y1="761.7" x2="1453.7" y2="761.7" stroke="#b8b8b8" stroke-width="1" stroke-dasharray="3 3"/><line x1="710.7" y1="802.6" x2="1453.7" y2="802.6" stroke="#b8b8b8" stroke-width="1" stroke-dasharray="3 3"/><rect x="710.7" y="434.5" width="743.0" height="409.0" fill="none" stroke="#000" stroke-width="1.200"/><polyline fill="none" stroke="#1480c6" stroke-width="1" shape-rendering="crispEdges" points="711.0,475.4 752.5,475.4 753.0,474.5 753.6,475.4 754.4,530.0 755.6,640.0 756.6,748.0 757.0,803.0 960.3,803.0 961.0,721.0 961.8,557.0 962.5,475.4 963.0,530.0 964.6,640.0 965.5,748.0 965.8,803.0 968.3,803.0 968.9,721.0 969.7,557.0 970.7,479.5 975.0,479.5 975.5,480.5 981.6,480.5 982.0,560.0 983.0,721.0 983.5,803.0 1009.5,803.0 1010.3,748.0 1011.5,640.0 1012.6,534.0 1012.8,481.4 1022.5,481.4 1022.8,560.0 1023.8,721.0 1024.4,803.0 1025.0,748.0 1026.3,534.0 1027.3,481.4 1028.0,482.0 1050.0,482.0 1052.0,481.0 1053.0,481.8 1055.2,481.4 1055.6,534.0 1057.0,640.0 1058.2,748.0 1058.6,803.0 1059.0,748.0 1060.3,640.0 1061.3,534.0 1061.7,481.4 1066.0,481.0 1070.0,480.0 1076.0,479.0 1081.0,478.5 1083.6,477.5 1087.0,478.3 1100.0,478.5 1104.0,479.3 1111.0,478.5 1114.0,479.8 1122.0,480.3 1126.0,481.0 1134.0,481.0 1140.2,481.1 1141.0,480.5 1141.7,481.4 1142.0,534.0 1142.5,640.0 1143.3,748.0 1143.5,803.0 1144.3,721.0 1145.0,557.0 1146.0,481.4 1146.6,557.0 1147.6,721.0 1148.4,803.0 1149.0,748.0 1150.0,557.0 1150.5,481.4 1160.0,481.0 1163.0,480.3 1168.0,480.7 1171.5,480.5"/></svg>
<div class="axl" style="left:641px;width:100px;text-align:center;top:424.8px">11.75</div>
<div class="axl" style="left:641px;width:100px;text-align:center;top:465.9px">10.45</div>
<div class="axl" style="left:641px;width:100px;text-align:center;top:506.9px">9.14</div>
<div class="axl" style="left:641px;width:100px;text-align:center;top:548.0px">7.83</div>
<div class="axl" style="left:641px;width:100px;text-align:center;top:589.0px">6.53</div>
<div class="axl" style="left:641px;width:100px;text-align:center;top:630.0px">5.22</div>
<div class="axl" style="left:641px;width:100px;text-align:center;top:671.1px">3.92</div>
<div class="axl" style="left:641px;width:100px;text-align:center;top:712.1px">2.61</div>
<div class="axl" style="left:641px;width:100px;text-align:center;top:753.2px">1.31</div>
<div class="axl" style="left:641px;width:100px;text-align:center;top:794.2px">0.00</div>
<div class="axl" style="left:641px;width:100px;text-align:center;top:835.3px">-1.31</div>
<div class="axl" style="left:708.5px;top:850px">0</div>
<div class="axl" style="left:739.5px;top:850px">1</div>
<div class="axl" style="left:770.4px;top:850px">2</div>
<div class="axl" style="left:801.4px;top:850px">3</div>
<div class="axl" style="left:832.3px;top:850px">4</div>
<div class="axl" style="left:863.3px;top:850px">5</div>
<div class="axl" style="left:894.2px;top:850px">6</div>
<div class="axl" style="left:925.2px;top:850px">7</div>
<div class="axl" style="left:956.2px;top:850px">8</div>
<div class="axl" style="left:987.1px;top:850px">9</div>
<div class="axl" style="left:1018.1px;top:850px">10</div>
<div class="axl" style="left:1049.0px;top:850px">11</div>
<div class="axl" style="left:1080.0px;top:850px">12</div>
<div class="axl" style="left:1111.0px;top:850px">13</div>
<div class="axl" style="left:1141.9px;top:850px">14</div>
<div class="axl" style="left:1172.9px;top:850px">15</div>
<div class="axl" style="left:1203.8px;top:850px">16</div>
<div class="axl" style="left:1234.8px;top:850px">17</div>
<div class="axl" style="left:1265.8px;top:850px">18</div>
<div class="axl" style="left:1296.7px;top:850px">19</div>
<div class="axl" style="left:1327.7px;top:850px">20</div>
<div class="axl" style="left:1358.6px;top:850px">21</div>
<div class="axl" style="left:1389.6px;top:850px">22</div>
<div class="axl" style="left:1420.5px;top:850px">23</div>
<div class="axl" style="left:1451.5px;top:850px">0</div>
<div class="axl" style="left:695px;top:865px;letter-spacing:.4px">3月11日</div>
<div class="axl" style="left:1440px;top:865px;letter-spacing:.4px">3月12日</div>
</div></div>
<style>
#sb{position:absolute;left:0;top:1011px;width:1920px;height:21px;background:#fafafa}
.sp{position:absolute;top:4px;height:17px;background:#f0f0f0;border:1px solid;border-color:#a0a0a0 #fff #fff #a0a0a0;font-size:12.300px;line-height:16px;padding-left:1px;white-space:pre;color:#000;overflow:hidden}
#tb{position:absolute;left:0;top:1032px;width:1920px;height:48px;background:linear-gradient(90deg,#d3dcf4 0%,#d6dff5 40%,#d4def6 70%,#d8e2f8 100%)}
</style>
<div id="sb">
<div class="sp" style="left:0;width:105px">准备好</div>
<div class="sp" style="left:107px;width:167px">Ver 2.3.0 LEG 3.3.18</div>
<div class="sp" style="left:276px;width:356px">系统时间:  2022年03月11日   15:03:49   星期五</div>
<div class="sp" style="left:634px;width:165px">安全运行天数:   91</div>
<div class="sp" style="left:802px;width:205px">当前用户:  Manager</div>
<div class="sp" style="left:1009px;width:167px">加密狗状态:  异常</div>
<div class="sp" style="left:1178px;width:634px">提示:  按Alt+D组合键打开功能面板</div>
<div class="sp" style="left:1814px;width:30px"></div>
<div class="sp" style="left:1846px;width:60px">N</div>
</div>
<div id="tb">
<svg class="abs" style="left:0;top:0" width="1920" height="48" viewBox="0 1032 1920 48"><defs>
<linearGradient id="w1" x1="0" y1="0" x2="1" y2="1"><stop offset="0" stop-color="#3cc4f8"/><stop offset="1" stop-color="#0f6fd0"/></linearGradient>
<linearGradient id="fo" x1="0" y1="0" x2="0" y2="1"><stop offset="0" stop-color="#ffd95e"/><stop offset="1" stop-color="#f5b920"/></linearGradient>
<linearGradient id="tv" x1="0" y1="0" x2="1" y2="1"><stop offset="0" stop-color="#fafafa"/><stop offset="1" stop-color="#c8c8c8"/></linearGradient>
</defs><rect x="18" y="1045" width="24" height="22" rx="1.500" fill="#0b5cb0"/><rect x="20" y="1047" width="9" height="18" rx="1" fill="#f6f6f6"/><rect x="31" y="1047" width="9" height="10" fill="#6ad8ff"/><rect x="31" y="1057" width="9" height="4" fill="#2aa8ff"/><rect x="31" y="1061" width="9" height="4" fill="#0a84f0"/><rect x="795" y="1045" width="11" height="11" rx="1" fill="url(#w1)"/><rect x="807" y="1045" width="11" height="11" rx="1" fill="url(#w1)"/><rect x="795" y="1057" width="11" height="11" rx="1" fill="url(#w1)"/><rect x="807" y="1057" width="11" height="11" rx="1" fill="url(#w1)"/><circle cx="852" cy="1054" r="7.800" fill="none" stroke="#1e1e1e" stroke-width="2.600"/><path d="M846.500 1060.500L840.500 1067" stroke="#1e1e1e" stroke-width="3" stroke-linecap="round"/><rect x="888" y="1047" width="18" height="15" rx="1.500" fill="url(#tv)"/><rect x="882" y="1053" width="17" height="14" rx="1.500" fill="#222"/><rect x="888" y="1053" width="11" height="9" fill="#8a8a8a"/><path d="M926 1050a2 2 0 0 1 2-2h6l3 3h11a2 2 0 0 1 2 2v3h-24z" fill="#e8a416"/><rect x="926" y="1053" width="24" height="15" rx="2" fill="url(#fo)"/><rect x="931" y="1062" width="14" height="6" rx="1.500" fill="#1f86dc"/><rect x="971" y="1047" width="24.500" height="17.500" rx="1" fill="#c4ccd4" stroke="#a0a8b0"/><rect x="972.500" y="1048.500" width="21.500" height="14.500" fill="#e4f4ff"/><path d="M972.500 1063v-5l2.500-2.500 2 2.500 2.500-8 3 7.500 2.500-3.500 2 2.500 2.500-7 3 8 1.500-2v7.500z" fill="#4aa0e0"/><rect x="980.500" y="1072.300" width="5.500" height="2.600" rx="1.300" fill="#858a94"/><rect x="1036" y="1037.800" width="10" height="37" rx="4" fill="#e4eaf8"/><rect x="1008" y="1037" width="34.300" height="38.600" rx="4" fill="#ebf0fc"/><rect x="1015" y="1046" width="24" height="2" fill="#3d70d8"/><rect x="1015" y="1064" width="24" height="1.100" fill="#3d70d8"/><rect x="1016.0" y="1048" width="1.300" height="14" fill="#b23434"/><rect x="1020.8" y="1048" width="1.300" height="14" fill="#b23434"/><rect x="1024.9" y="1048" width="1.300" height="14" fill="#b23434"/><rect x="1029.9" y="1048" width="1.300" height="14" fill="#b23434"/><rect x="1034.0" y="1048" width="1.300" height="14" fill="#b23434"/><rect x="1018.3" y="1048" width="1.400" height="4.500" fill="#e6a4a4"/><rect x="1027.3" y="1048" width="1.400" height="4.500" fill="#e6a4a4"/><rect x="1036.3" y="1048" width="1.400" height="4.500" fill="#e6a4a4"/><rect x="1022.8" y="1048" width="1.200" height="5.200" fill="#a82020"/><rect x="1031.8" y="1048" width="1.200" height="5.200" fill="#a82020"/><rect x="1019" y="1072.200" width="16" height="3" rx="1.500" fill="#1a78d8"/><rect x="1059.200" y="1044" width="23.600" height="18" rx="1.500" fill="#0c3c9c"/><rect x="1059.200" y="1044" width="22.600" height="17" rx="1.500" fill="#349c9a"/><rect x="1059.500" y="1061.800" width="23" height="5.800" rx="1" fill="#dedede" stroke="#6a6a6a" stroke-width=".8"/><rect x="1061.500" y="1063.700" width="8" height="1.500" fill="#7c7c7c"/><rect x="1072" y="1063.700" width="8.500" height="1.500" fill="#7c7c7c"/><rect x="1068" y="1072.300" width="5.500" height="2.600" rx="1.300" fill="#858a94"/><path d="M1104.600 1048.600h9l-4 14z" fill="none" stroke="#ff2d1c" stroke-width="3.200" stroke-linejoin="round"/><path d="M1114 1053.500l3.200 10 7.300-13" fill="none" stroke="#ff5a12" stroke-width="3.200" stroke-linejoin="round" stroke-linecap="round"/><path d="M1120 1044.500a2.500 2.500 0 0 1 2.500-2.500h3.500l3 3v4.700a2.500 2.500 0 0 1-2.500 2.500h-4a2.500 2.500 0 0 1-2.500-2.500z" fill="#5c9cf2"/><path d="M1121.800 1046l1.200 3.500 1.500-2.800 1.500 2.800 1.200-3.500" fill="none" stroke="#fff" stroke-width="1"/><rect x="1112" y="1072.300" width="5.500" height="2.600" rx="1.300" fill="#858a94"/><path d="M1668 1059.500l6-6 6 6" fill="none" stroke="#1e1e1e" stroke-width="1.500"/><g fill="none" stroke="#1e1e1e" stroke-width="1.300" stroke-linecap="round"><path d="M1770.500 1052.500a10 10 0 0 1 14 0"/><path d="M1773 1055.500a6.500 6.500 0 0 1 9 0"/><path d="M1775.500 1058.300a3 3 0 0 1 4 0"/></g><circle cx="1777.500" cy="1060.500" r="1.200" fill="#1e1e1e"/><path d="M1794.500 1053.500h3l4-3.500v12l-4-3.500h-3z" fill="none" stroke="#1e1e1e" stroke-width="1.200" stroke-linejoin="round"/><path d="M1803.500 1053.500a3.500 3.500 0 0 1 0 5M1805.500 1051.500a6.500 6.500 0 0 1 0 9" fill="none" stroke="#1e1e1e" stroke-width="1.100" stroke-linecap="round"/><path d="M1807.500 1049.800a9 9 0 0 1 0 12.500" fill="none" stroke="#b0b4c0" stroke-width="1"/><circle cx="1892" cy="1056" r="8" fill="#0a74d6"/></svg>
<div class="t" style="left:1693px;top:15px;font-size:16px;color:#111">中</div>
<div class="t" style="left:1732px;top:15px;font-size:16px;color:#111">拼</div>
<div class="t" style="left:1777px;width:100px;text-align:right;top:10px;font-size:12px;color:#111">15:03</div>
<div class="t" style="left:1777.500px;width:100px;text-align:right;top:26px;font-size:12px;color:#111">2022/3/11</div>
<div class="t" style="left:1884px;width:16px;text-align:center;top:18px;font-size:12px;color:#fff">3</div>
</div>
<div class="abs" style="left:1858px;top:908px;width:62px;height:124px;background:#16171f;border:1px solid #3e3e44;border-right:none"></div>
<div class="abs" style="left:1903px;top:909px;width:17px;height:122px;background:#535564"></div>
<div class="abs" style="left:1859px;top:969.500px;width:61px;height:1.600px;background:#424248"></div>
<svg class="abs" style="left:1867px;top:925px" width="29" height="29" viewBox="0 0 29 29"><rect x="0" y="0" width="29" height="29" rx="7" fill="#303137"/><path d="M7 6.100V17.100L21.900 12.200z" fill="#1b1c24"/><path d="M21.900 12.900V22.700L10.900 17.600z" fill="#1b1c24"/></svg>
<div class="abs" style="left:1909.300px;top:932.8px;width:3.200px;height:3.200px;border-radius:2px;background:#c88a68"></div>
<div class="abs" style="left:1909.300px;top:937.4px;width:3.200px;height:3.200px;border-radius:2px;background:#c88a68"></div>
<div class="abs" style="left:1909.300px;top:942.0px;width:3.200px;height:3.200px;border-radius:2px;background:#c88a68"></div>
<svg class="abs" style="left:1867px;top:987px" width="29" height="29" viewBox="0 0 29 29"><rect x="0" y="0" width="29" height="29" rx="7" fill="#303137"/><path d="M7 6.100V17.100L21.900 12.200z" fill="#1b1c24"/><path d="M21.900 12.900V22.700L10.900 17.600z" fill="#1b1c24"/></svg>
<div class="abs" style="left:1909.300px;top:994.8px;width:3.200px;height:3.200px;border-radius:2px;background:#c88a68"></div>
<div class="abs" style="left:1909.300px;top:999.4px;width:3.200px;height:3.200px;border-radius:2px;background:#c88a68"></div>
<div class="abs" style="left:1909.300px;top:1004.0px;width:3.200px;height:3.200px;border-radius:2px;background:#c88a68"></div>
</body></html>
